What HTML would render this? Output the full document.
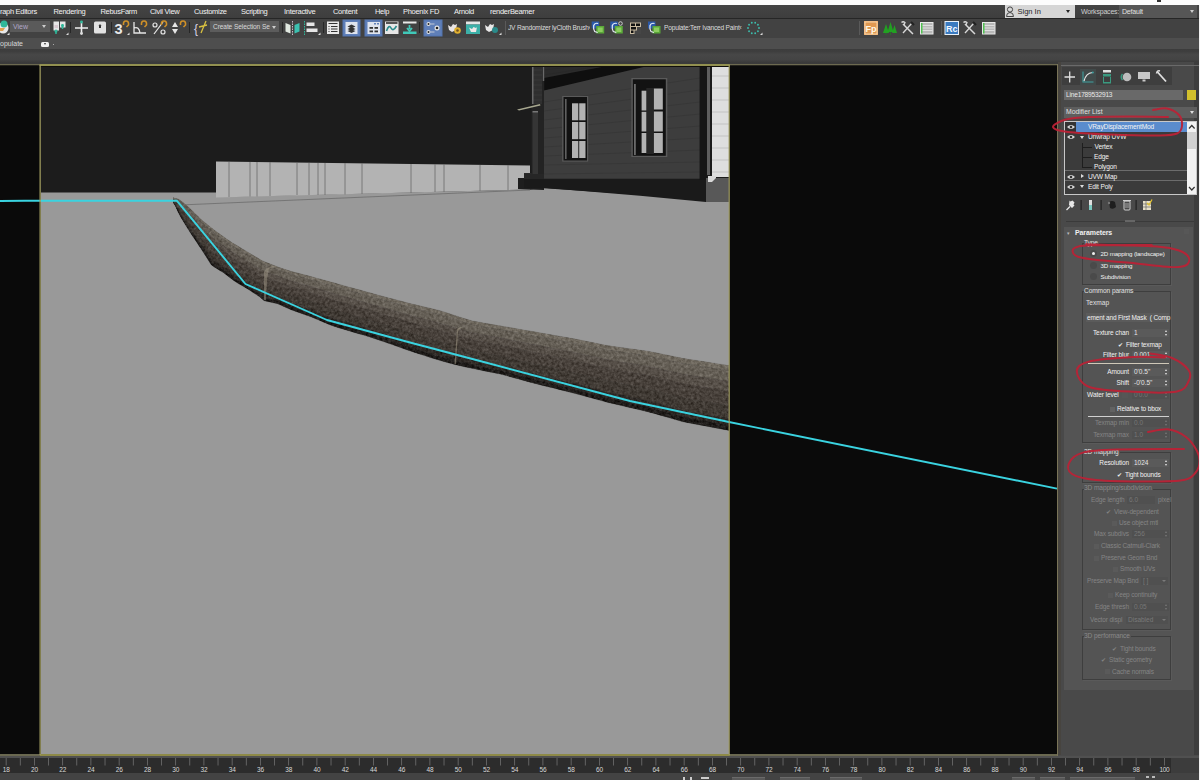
<!DOCTYPE html>
<html><head><meta charset="utf-8">
<style>
*{margin:0;padding:0;box-sizing:border-box}
html,body{width:1200px;height:780px;overflow:hidden;background:#444;font-family:"Liberation Sans",sans-serif;color:#ddd;position:relative}
.a{position:absolute}
.t{position:absolute;white-space:nowrap}
svg{position:absolute;overflow:hidden}
</style></head><body>
<div class="a" style="left:0px;top:0px;width:1200px;height:5px;background:#fdfdfd;"></div>
<div class="a" style="left:1157px;top:0px;width:4px;height:1.5px;background:#333;"></div>
<div class="a" style="left:1198px;top:5px;width:2px;height:13px;background:#e8e8e8;"></div>
<div class="a" style="left:0px;top:5px;width:1200px;height:13px;background:#404040;background:linear-gradient(#444,#3e3e3e);"></div>
<div class="t" style="top:6.50px;font-size:7.5px;line-height:10px;color:#f2f2f2;letter-spacing:-0.3px;left:0px;">raph Editors</div>
<div class="t" style="top:6.50px;font-size:7.5px;line-height:10px;color:#f2f2f2;letter-spacing:-0.3px;left:53.5px;">Rendering</div>
<div class="t" style="top:6.50px;font-size:7.5px;line-height:10px;color:#f2f2f2;letter-spacing:-0.3px;left:100.5px;">RebusFarm</div>
<div class="t" style="top:6.50px;font-size:7.5px;line-height:10px;color:#f2f2f2;letter-spacing:-0.3px;left:150px;">Civil View</div>
<div class="t" style="top:6.50px;font-size:7.5px;line-height:10px;color:#f2f2f2;letter-spacing:-0.3px;left:194px;">Customize</div>
<div class="t" style="top:6.50px;font-size:7.5px;line-height:10px;color:#f2f2f2;letter-spacing:-0.3px;left:241px;">Scripting</div>
<div class="t" style="top:6.50px;font-size:7.5px;line-height:10px;color:#f2f2f2;letter-spacing:-0.3px;left:284px;">Interactive</div>
<div class="t" style="top:6.50px;font-size:7.5px;line-height:10px;color:#f2f2f2;letter-spacing:-0.3px;left:333px;">Content</div>
<div class="t" style="top:6.50px;font-size:7.5px;line-height:10px;color:#f2f2f2;letter-spacing:-0.3px;left:375px;">Help</div>
<div class="t" style="top:6.50px;font-size:7.5px;line-height:10px;color:#f2f2f2;letter-spacing:-0.3px;left:403px;">Phoenix FD</div>
<div class="t" style="top:6.50px;font-size:7.5px;line-height:10px;color:#f2f2f2;letter-spacing:-0.3px;left:454px;">Arnold</div>
<div class="t" style="top:6.50px;font-size:7.5px;line-height:10px;color:#f2f2f2;letter-spacing:-0.3px;left:490px;">renderBeamer</div>
<div class="a" style="left:1005px;top:5px;width:70px;height:13px;background:#d6d6d6;"></div>
<div class="t" style="top:6.50px;font-size:7.5px;line-height:10px;color:#1e1e1e;left:1017.5px;">Sign In</div>
<svg style="left:1005px;top:5px" width="10" height="13" viewBox="0 0 10 13"><circle cx="5" cy="4.5" r="2.6" fill="none" stroke="#444" stroke-width="1"/><path d="M1.5,11.5 Q1.5,7.5 5,7.5 Q8.5,7.5 8.5,11.5Z" fill="none" stroke="#444" stroke-width="1"/></svg><div class="a" style="left:1066px;top:10px;width:0;height:0;border-left:2.5px solid transparent;border-right:2.5px solid transparent;border-top:3px solid #222"></div><div class="t" style="top:6.50px;font-size:7px;line-height:10px;color:#cfcfcf;letter-spacing:-0.2px;left:1081px;">Workspaces:</div>
<div class="a" style="left:1119px;top:5px;width:78px;height:13px;background:#565656;"></div>
<div class="t" style="top:6.50px;font-size:7px;line-height:10px;color:#e0e0e0;letter-spacing:-0.2px;left:1122px;">Default</div>
<div class="a" style="left:1190px;top:10px;width:0;height:0;border-left:2.5px solid transparent;border-right:2.5px solid transparent;border-top:3px solid #ccc"></div><div class="a" style="left:0px;top:18px;width:1200px;height:20px;background:#424242;"></div>
<div class="a" style="left:0px;top:18px;width:1200px;height:1px;background:#262626;"></div>
<div class="a" style="left:0px;top:38px;width:1200px;height:11px;background:#4e4e4e;"></div>
<svg style="left:0;top:0" width="1200" height="40" viewBox="0 0 1200 40"><circle cx="3" cy="28" r="5.5" fill="#e8e8e8"/><circle cx="4" cy="24" r="3.5" fill="#2fb89a"/><path d="M-2,28 L5,28 L3,31 L-2,31Z" fill="#e0a050"/><path d="M7,35 L9.5,35 L9.5,32.5Z" fill="#ddd"/><rect x="53.5" y="21.5" width="5.5" height="9" fill="#e6e6e6"/><rect x="60" y="21.5" width="5.5" height="6" fill="#e6e6e6"/><rect x="54.5" y="25" width="3.5" height="3" fill="#d8c8d0"/><path d="M56,30 L56,34 M62.5,24 L62.5,29" stroke="#2fb89a" stroke-width="1.5"/><circle cx="56" cy="31" r="1.5" fill="#2fb89a"/><circle cx="62.5" cy="25.5" r="1.5" fill="#2fb89a"/><path d="M66,35 L68.5,35 L68.5,32.5Z" fill="#ddd"/><rect x="70" y="22" width="1" height="11" fill="#262626"/><path d="M75,28 L88,28 M81.5,21.5 L81.5,34" stroke="#eee" stroke-width="1.6"/><circle cx="81.5" cy="22" r="1.4" fill="#2fb89a"/><circle cx="81.5" cy="33.5" r="1.4" fill="#ddd"/><rect x="94" y="21.5" width="12" height="12" rx="1.5" fill="#e2e2e2"/><path d="M98.5,26 L100,24 L101.5,26 L101,26 L101,28 L99,28 L99,26Z" fill="#333"/><rect x="111" y="22" width="1" height="11" fill="#262626"/><text x="114.5" y="33.5" font-family="Liberation Sans" font-weight="bold" font-size="14.5" fill="#e8e8e8">3</text><path d="M123.5,25 Q123,21 126,21 Q129,21 128.5,25 L126.5,27" stroke="#cf9028" stroke-width="1.6" fill="none"/><path d="M127,35 L129.5,35 L129.5,32.5Z" fill="#ddd"/><path d="M134,22 L134,33 L146,33 M134,28 Q139,26 140,33" stroke="#e6e6e6" stroke-width="1.3" fill="none"/><path d="M141.5,25 Q141,21 144,21 Q147,21 146.5,25 L144.5,27" stroke="#cf9028" stroke-width="1.6" fill="none"/><circle cx="155" cy="25" r="2" stroke="#e6e6e6" stroke-width="1.2" fill="none"/><circle cx="163" cy="32" r="2" stroke="#e6e6e6" stroke-width="1.2" fill="none"/><path d="M154,34 L163,22" stroke="#e6e6e6" stroke-width="1.2"/><path d="M161.5,25 Q161,21 164,21 Q167,21 166.5,25 L164.5,27" stroke="#cf9028" stroke-width="1.6" fill="none"/><path d="M172,27 L175,22 L178,27Z M172,29 L178,29 L175,34Z" fill="#e6e6e6"/><path d="M180.5,25 Q180,21 183,21 Q186,21 185.5,25 L183.5,27" stroke="#cf9028" stroke-width="1.6" fill="none"/><rect x="189" y="22" width="1" height="11" fill="#262626"/><text x="194" y="33" font-family="Liberation Sans" font-size="12" fill="#d8d0e8">{</text><path d="M201,33 L206,21 M199,27 L207,25" stroke="#d8c040" stroke-width="1.3"/><rect x="282" y="22" width="1" height="11" fill="#262626"/><path d="M285.5,23 L290.5,25 L290.5,33.5 L285.5,31.5Z" fill="#e0e8e0"/><path d="M299.5,23 L294.5,25 L294.5,33.5 L299.5,31.5Z" fill="#3cc0b0"/><path d="M292.5,21 L292.5,35" stroke="#c8b8c8" stroke-width="1" stroke-dasharray="1.5,1"/><path d="M304.5,21 L304.5,35" stroke="#2fb89a" stroke-width="1" stroke-dasharray="1.5,1"/><rect x="306.5" y="22.5" width="8" height="3.5" fill="#e6e6e6"/><rect x="306.5" y="28.5" width="11" height="3.5" fill="#e6e6e6"/><path d="M318,35 L320.5,35 L320.5,32.5Z" fill="#ddd"/><rect x="323" y="22" width="1" height="11" fill="#262626"/><rect x="327" y="21.5" width="12" height="12.5" fill="#e8e8e8"/><path d="M328.5,23.5 L337.5,23.5 M328.5,26.5 L329.5,26.5 M331,26.5 L337.5,26.5 M328.5,29 L329.5,29 M331,29 L337.5,29 M328.5,31.5 L329.5,31.5 M331,31.5 L337.5,31.5" stroke="#333" stroke-width="1"/><rect x="343" y="20" width="17" height="16" fill="#5f7fb8" stroke="#5374b0" stroke-width="1"/><rect x="345.5" y="22" width="12" height="12" fill="#dfe4ee"/><path d="M347.5,26.5 L351.5,24.5 L355.5,26.5 L351.5,28.5Z M347.5,29 L351.5,27 L355.5,29 L351.5,31Z M347.5,31 L351.5,29.5 L355.5,31 L351.5,33Z" fill="#333"/><rect x="365" y="20" width="17" height="16" fill="#5f7fb8" stroke="#5374b0" stroke-width="1"/><rect x="367.5" y="22" width="12.5" height="12" fill="#dfe4ee"/><rect x="374" y="23" width="2" height="1.5" fill="#6080b8"/><rect x="377" y="23" width="2" height="1.5" fill="#6080b8"/><rect x="369.5" y="27" width="3.5" height="1.8" fill="#333"/><rect x="374.5" y="27" width="3.5" height="1.8" fill="#333"/><rect x="369.5" y="30.5" width="3.5" height="1.8" fill="#333"/><rect x="374.5" y="30.5" width="3.5" height="1.8" fill="#333"/><rect x="385" y="21.5" width="13.5" height="12.5" fill="#e6e6e6"/><rect x="386" y="22" width="11.5" height="2" fill="#555"/><path d="M386.5,31 Q389,24 391,28 Q393,32 396.5,26" stroke="#2a8a8a" stroke-width="1.6" fill="none"/><rect x="403" y="21.5" width="13.5" height="2" fill="#e8e8e8"/><path d="M409.5,25 L409.5,29 M407,28 L409.5,31 L412,28" stroke="#40c8b8" stroke-width="1.8" fill="none"/><rect x="403" y="31.5" width="13.5" height="2.5" fill="#40c8b8"/><rect x="419" y="22" width="1" height="11" fill="#262626"/><rect x="424" y="20" width="18" height="16" fill="#5f7fb8" stroke="#5374b0" stroke-width="1"/><circle cx="428.5" cy="24" r="2" fill="#e8e8e8"/><circle cx="428.5" cy="24" r="1" fill="#222"/><circle cx="428.5" cy="32" r="2" fill="#e8e8e8"/><circle cx="428.5" cy="32" r="1" fill="#222"/><circle cx="437" cy="28" r="2.5" fill="#e8e8e8"/><circle cx="437" cy="28" r="1.3" fill="#222"/><path d="M430.5,24 L434.5,24 M430.5,32 L434.5,32" stroke="#ddd" stroke-width="0.8"/><path d="M448,25 L451,27 L453,24 L455,25 L457,24 L456,30 L452,32 L449,30Z" fill="#e8e4e4"/><circle cx="457.5" cy="30.5" r="3.3" fill="#e0b030"/><circle cx="457.5" cy="30.5" r="1.3" fill="#705020"/><rect x="466" y="21.5" width="14" height="3" fill="#e6e6e6"/><rect x="466" y="24.5" width="14" height="9.5" fill="#3cb0a8"/><path d="M469,27.5 L472,29 L473.5,27 L476,28 L477,27 L476,32 L471,32Z" fill="#f0e8e8"/><path d="M485,25 L488,27 L490,24 L492,25 L494,24 L493,30 L489,32 L486,30Z" fill="#e8e8e8"/><circle cx="495" cy="30" r="3" fill="#2a8a8a"/><path d="M499,35 L501.5,35 L501.5,32.5Z" fill="#ddd"/><rect x="505" y="21" width="1" height="14" fill="#5a5a5a"/><rect x="591.7" y="21.5" width="7.5" height="7" fill="#2a58a8"/><rect x="596.2" y="26" width="8" height="7.5" fill="#5aa838"/><rect x="597.7" y="27.5" width="5" height="4.5" fill="#8ccc60"/><path d="M598.2,23.5 Q594.7,22.5 593.7,25.5 Q593.2,29 594.7,31.5 L597.7,32.5" stroke="#e8eef8" stroke-width="1.2" fill="none"/><rect x="610.3" y="21.5" width="7.5" height="7" fill="#2a58a8"/><rect x="614.8" y="26" width="8" height="7.5" fill="#5aa838"/><rect x="616.3" y="27.5" width="5" height="4.5" fill="#8ccc60"/><path d="M616.8,23.5 Q613.3,22.5 612.3,25.5 Q611.8,29 613.3,31.5 L616.3,32.5" stroke="#e8eef8" stroke-width="1.2" fill="none"/><rect x="648" y="21.5" width="7.5" height="7" fill="#2a58a8"/><rect x="652.5" y="26" width="8" height="7.5" fill="#5aa838"/><rect x="654" y="27.5" width="5" height="4.5" fill="#8ccc60"/><path d="M654.5,23.5 Q651,22.5 650,25.5 Q649.5,29 651,31.5 L654,32.5" stroke="#e8eef8" stroke-width="1.2" fill="none"/><circle cx="620.5" cy="23.5" r="1.8" fill="none" stroke="#e8e8e8" stroke-width="0.8"/><rect x="630" y="22.5" width="11" height="11.5" fill="#c8baa0"/><rect x="631" y="23.5" width="4" height="2.5" fill="#111"/><rect x="636" y="23.5" width="4" height="2.5" fill="#111"/><rect x="631" y="27" width="5" height="2.5" fill="#111"/><rect x="631" y="30.5" width="2.5" height="2.5" fill="#111"/><rect x="637" y="27" width="4" height="7" fill="#464646"/><rect x="634.5" y="30.5" width="6.5" height="3.5" fill="#464646"/><circle cx="759.00" cy="28.00" r="0.9" fill="#3cc0b0"/><circle cx="757.95" cy="31.23" r="0.9" fill="#3cc0b0"/><circle cx="755.20" cy="33.23" r="0.9" fill="#3cc0b0"/><circle cx="751.80" cy="33.23" r="0.9" fill="#3cc0b0"/><circle cx="749.05" cy="31.23" r="0.9" fill="#3cc0b0"/><circle cx="748.00" cy="28.00" r="0.9" fill="#3cc0b0"/><circle cx="749.05" cy="24.77" r="0.9" fill="#3cc0b0"/><circle cx="751.80" cy="22.77" r="0.9" fill="#3cc0b0"/><circle cx="755.20" cy="22.77" r="0.9" fill="#3cc0b0"/><circle cx="757.95" cy="24.77" r="0.9" fill="#3cc0b0"/><path d="M760,35 L762.5,35 L762.5,32.5Z" fill="#ddd"/><rect x="859" y="21" width="1" height="14" fill="#5a5a5a"/><rect x="864" y="21" width="14" height="14" fill="#f0a860"/><rect x="865" y="22" width="12" height="12" fill="#e09850" stroke="#f8e0c0" stroke-width="0.8"/><text x="865.5" y="32" font-family="Liberation Sans" font-weight="bold" font-size="9" fill="#fff8e8">Fp</text><path d="M883,33 L886,24 L889,33Z M887.5,32 L890.5,22 L893.5,32Z M892,33 L894.5,25 L897,33Z" fill="#22a022"/><path d="M885.5,33 L886.5,33 L886.5,35 L885.5,35Z M890,32 L891,32 L891,35 L890,35Z" fill="#2a6a2a"/><path d="M903,24 L913,34" stroke="#d8d8d8" stroke-width="1.5"/><path d="M912,23 L903,33" stroke="#d8d8d8" stroke-width="1.3"/><path d="M901.5,22.5 Q903,21 905,22.5 L904,25" stroke="#d8d8d8" stroke-width="1.3" fill="none"/><path d="M911,22 L914,25" stroke="#222" stroke-width="2.2"/><path d="M965,24 L975,34" stroke="#d8d8d8" stroke-width="1.5"/><path d="M974,23 L965,33" stroke="#d8d8d8" stroke-width="1.3"/><path d="M963.5,22.5 Q965,21 967,22.5 L966,25" stroke="#d8d8d8" stroke-width="1.3" fill="none"/><path d="M973,22 L976,25" stroke="#222" stroke-width="2.2"/><rect x="920" y="22" width="13.5" height="12.5" fill="#e8e8e8"/><rect x="921" y="23" width="11.5" height="10.5" fill="#b8b8b8"/><path d="M921,25.5 L932.5,25.5 M921,28 L932.5,28 M921,30.5 L932.5,30.5" stroke="#e8e8e8" stroke-width="0.8"/><rect x="921" y="23" width="1.5" height="10.5" fill="#50c050"/><rect x="982" y="22" width="13.5" height="12.5" fill="#e8e8e8"/><rect x="983" y="23" width="11.5" height="10.5" fill="#b8b8b8"/><path d="M983,25.5 L994.5,25.5 M983,28 L994.5,28 M983,30.5 L994.5,30.5" stroke="#e8e8e8" stroke-width="0.8"/><rect x="983" y="23" width="1.5" height="10.5" fill="#50c050"/><rect x="941" y="21" width="1" height="14" fill="#5a5a5a"/><rect x="944.5" y="21" width="14.5" height="14" fill="#e8f0f8"/><rect x="945.5" y="22" width="12.5" height="12" fill="#3a7ac0"/><text x="946" y="32" font-family="Liberation Sans" font-weight="bold" font-size="9" fill="#f0f8ff">Rc</text></svg>
<div class="a" style="left:10px;top:21px;width:40px;height:11px;background:#5a5a5a;"></div>
<div class="t" style="top:21.50px;font-size:7px;line-height:10px;color:#b0a8c8;left:13px;">View</div>
<div class="a" style="left:42px;top:25px;width:0;height:0;border-left:2.5px solid transparent;border-right:2.5px solid transparent;border-top:3px solid #ccc"></div>
<div class="a" style="left:209.75px;top:21px;width:69.5px;height:11.3px;background:#5c5c5c;"></div>
<div class="t" style="top:21.60px;font-size:6.6px;line-height:10px;color:#d8d8d8;letter-spacing:-0.1px;left:213px;">Create Selection Se</div>
<div class="a" style="left:271.5px;top:25.5px;width:0;height:0;border-left:2.5px solid transparent;border-right:2.5px solid transparent;border-top:3px solid #ccc"></div>
<div class="t" style="top:23.00px;font-size:6.6px;line-height:10px;color:#dcdcdc;letter-spacing:-0.2px;left:508px;width:82px;overflow:hidden;">JV Randomizer&nbsp;lyCloth Brush&#8249;</div>
<div class="t" style="top:23.00px;font-size:6.6px;line-height:10px;color:#dcdcdc;letter-spacing:-0.2px;left:664px;width:81px;overflow:hidden;">Populate:Terr&nbsp;Ivanced Paint&#8249;</div>
<div class="t" style="top:38.50px;font-size:7px;line-height:10px;color:#d8d8d8;left:0px;">opulate</div>
<div class="a" style="left:41px;top:42px;width:8px;height:4.5px;background:#f0f0f0;border-radius:1.5px;"></div>
<div class="a" style="left:43.5px;top:43.3px;width:0;height:0;border-left:1.5px solid transparent;border-right:1.5px solid transparent;border-top:2px solid #333"></div>
<div class="a" style="left:52.5px;top:43.5px;width:1.5px;height:1.5px;background:#aaa;"></div>
<div class="a" style="left:0px;top:49px;width:1200px;height:16px;background:#404040;background:linear-gradient(#3c3c3c,#3e3e3e 15%,#474747 35%,#444 65%,#3a3a3a 85%,#3c3c3c);"></div>
<svg class="a" style="left:0;top:64px" width="1058" height="692" viewBox="0 64 1058 692">
<defs>
<filter id="noise" x="0" y="0" width="100%" height="100%" color-interpolation-filters="sRGB">
<feTurbulence type="fractalNoise" baseFrequency="0.35" numOctaves="3" seed="7" result="n"/>
<feColorMatrix in="n" type="matrix" values="1 0 0 0 0  1 0 0 0 0  1 0 0 0 0  0 0 0 0 1" result="g"/>
<feComposite in="SourceGraphic" in2="g" operator="arithmetic" k1="0" k2="1" k3="0.26" k4="-0.13" result="c"/>
<feComposite in="c" in2="SourceGraphic" operator="in"/>
</filter>
<linearGradient id="curbg" x1="0" y1="0" x2="0" y2="1">
<stop offset="0" stop-color="#6b6457"/><stop offset="0.3" stop-color="#585146"/><stop offset="1" stop-color="#3b352e"/>
</linearGradient>
</defs>
<rect x="0" y="64" width="1058" height="691" fill="#0a0a0a"/>
<!-- image area -->
<rect x="41" y="65" width="688" height="689" fill="#999999"/>
<polygon points="41,65 729,65 729,178 706,178 706,199 540,188 530,189.5 216,197 216,192.6 41,192.6" fill="#1c1c1c"/>
<!-- fence -->
<polygon points="216,161.6 530,165.5 530,189.5 216,197.5" fill="#b3b3b3"/>
<g stroke="#6a6a6a" stroke-width="0.8">
<line x1="229" y1="162" x2="229" y2="197"/><line x1="250" y1="162" x2="250" y2="196.5"/><line x1="257" y1="162" x2="257" y2="196.5"/><line x1="270" y1="162" x2="270" y2="196"/><line x1="297" y1="163" x2="297" y2="195"/><line x1="309" y1="163" x2="309" y2="195"/><line x1="318" y1="163" x2="318" y2="195"/><line x1="325" y1="163" x2="325" y2="195"/><line x1="345" y1="163" x2="345" y2="194.5"/><line x1="362" y1="163" x2="362" y2="194"/><line x1="411" y1="164" x2="411" y2="193"/><line x1="435" y1="164" x2="435" y2="192"/><line x1="444" y1="164" x2="444" y2="192"/><line x1="480" y1="165" x2="480" y2="191"/><line x1="508" y1="165" x2="508" y2="190"/>
</g>
<line x1="180" y1="205" x2="530" y2="190" stroke="#6c6c6c" stroke-width="0.8"/>
<!-- steps -->
<polygon points="518,178 544,178 544,190 518,189" fill="#1e1e1e"/>
<rect x="524" y="173" width="20" height="6" fill="#2a2a2a"/>
<!-- house -->
<polygon points="544,65 729,65 729,70 700,67 544,90.5" fill="#0f0f0f"/>
<polygon points="544,65 612,65 544,78" fill="#2b2b2b"/>
<g stroke="#262626" stroke-width="0.6"><line x1="544" y1="70" x2="585" y2="65"/><line x1="544" y1="75" x2="600" y2="66"/></g>
<rect x="531.5" y="65" width="12.7" height="115" fill="#232323"/>
<rect x="533" y="65" width="9" height="39" fill="#2f2f2f"/>
<g stroke="#3e3e3e" stroke-width="0.6"><line x1="533" y1="70" x2="542" y2="70"/><line x1="533" y1="75" x2="542" y2="75"/><line x1="533" y1="80" x2="542" y2="80"/><line x1="533" y1="85" x2="542" y2="85"/><line x1="533" y1="90" x2="542" y2="90"/><line x1="533" y1="95" x2="542" y2="95"/><line x1="533" y1="100" x2="542" y2="100"/></g>
<rect x="532" y="65" width="1.5" height="39" fill="#6a6a6a"/>
<rect x="542.8" y="65" width="1.4" height="16" fill="#6a6a6a"/>
<rect x="532.5" y="112" width="5.5" height="66" fill="#353535"/>
<rect x="532.5" y="111" width="5.5" height="1.5" fill="#777"/>
<polygon points="517,109.5 540,104 540.5,105.5 519,110.5" fill="#a8a890"/>
<polygon points="544,90.5 652,65 700,65 700,179 544,179" fill="#3d3d3d"/>
<g stroke="#353535" stroke-width="0.7">
<line x1="544" y1="102" x2="700" y2="78"/><line x1="544" y1="111" x2="700" y2="90"/><line x1="544" y1="120" x2="700" y2="102"/><line x1="544" y1="129" x2="700" y2="114"/><line x1="544" y1="138" x2="700" y2="126"/><line x1="544" y1="147" x2="700" y2="138"/><line x1="544" y1="156" x2="700" y2="150"/><line x1="544" y1="165" x2="700" y2="162"/><line x1="544" y1="174" x2="700" y2="172"/>
</g>
<polygon points="524,178.7 706,178.7 706,202 640,195.7 544,187.7 524,188" fill="#1a1a1a"/>
<rect x="524" y="174" width="20" height="5" fill="#262626"/>
<rect x="699.6" y="65" width="7.4" height="115" fill="#151515"/>
<rect x="707" y="65" width="3" height="110" fill="#5e5e5e"/>
<rect x="710" y="65" width="2" height="113" fill="#1a1a1a"/>
<rect x="712" y="65" width="17" height="112" fill="#dedede"/>
<g stroke="#b8b8b8" stroke-width="0.7"><line x1="712" y1="76" x2="729" y2="76"/><line x1="712" y1="88" x2="729" y2="88"/><line x1="712" y1="100" x2="729" y2="100"/><line x1="712" y1="112" x2="729" y2="112"/><line x1="712" y1="124" x2="729" y2="124"/><line x1="712" y1="136" x2="729" y2="136"/><line x1="712" y1="148" x2="729" y2="148"/><line x1="712" y1="160" x2="729" y2="160"/><line x1="712" y1="172" x2="729" y2="172"/></g>
<polygon points="706,178 729,178 729,202 706,202" fill="#585858"/>
<polygon points="708,176 716,176 716,178 712,182 708,182" fill="#d8d8d8"/>
<!-- window 1 -->
<rect x="562.2" y="96" width="26" height="65.6" fill="#5a5a5a"/>
<rect x="563.5" y="97" width="23.5" height="63.5" fill="#121212"/>
<rect x="565" y="99" width="1.6" height="60" fill="#606060"/>
<g fill="#b2b2b2"><rect x="572" y="103.3" width="6.3" height="17"/><rect x="579.2" y="103.3" width="6.3" height="17"/><rect x="572" y="122" width="6.3" height="17.2"/><rect x="579.2" y="122" width="6.3" height="17.2"/><rect x="572" y="141" width="6.3" height="17"/><rect x="579.2" y="141" width="6.3" height="17"/></g>
<!-- window 2 -->
<rect x="631.4" y="78" width="35.9" height="79" fill="#5a5a5a"/>
<rect x="632.8" y="79.3" width="33" height="76.5" fill="#121212"/>
<rect x="634" y="84" width="1.8" height="71" fill="#6a6a6a"/>
<rect x="646.3" y="88" width="7.6" height="66" fill="#262626"/>
<g fill="#b2b2b2"><rect x="641.6" y="90.7" width="4.7" height="19.8"/><rect x="653.9" y="88.5" width="8.9" height="21"/><rect x="641.6" y="111.8" width="4.7" height="19.7"/><rect x="653.9" y="111.5" width="8.9" height="20"/><rect x="641.6" y="133" width="4.7" height="20"/><rect x="653.9" y="133" width="8.9" height="20"/></g>
<!-- curb -->
<g filter="url(#noise)"><polygon points="173.0,197.6 175.5,198.3 178.1,198.9 180.6,200.4 183.2,202.5 185.7,204.7 188.3,206.8 190.8,209.3 193.3,211.8 195.9,214.3 198.4,216.8 201.0,219.3 203.5,221.4 206.1,223.4 208.6,225.4 211.1,227.5 213.7,229.5 216.2,231.5 218.8,233.3 221.3,235.1 223.9,236.9 226.4,238.7 228.9,240.5 231.5,242.3 234.0,243.8 236.6,245.3 239.1,246.8 241.7,248.4 244.2,249.9 246.7,251.4 249.3,252.9 251.8,254.5 254.4,256.0 256.9,257.5 259.5,259.1 262.0,260.6 264.0,261.5 270.7,264.1 277.5,266.8 284.2,269.1 291.0,271.3 297.7,273.0 304.4,274.8 311.2,276.6 317.9,278.4 324.7,280.3 331.4,282.1 338.1,284.0 344.9,285.9 351.6,287.7 358.3,289.6 365.1,291.4 371.8,293.3 378.6,295.2 385.3,297.0 392.0,298.8 398.8,300.5 405.5,302.3 412.3,304.0 419.0,305.6 425.7,307.2 432.5,308.8 439.2,310.4 446.0,312.5 452.7,314.7 459.4,316.9 466.2,319.1 472.9,321.0 479.7,322.2 486.4,323.4 493.1,324.6 499.9,325.8 506.6,326.9 513.3,328.1 520.1,329.3 526.8,330.5 533.6,331.6 540.3,332.8 547.0,334.0 553.8,335.2 560.5,336.4 567.3,337.6 574.0,338.8 580.7,340.1 587.5,341.5 594.2,342.8 601.0,344.2 607.7,345.5 614.4,346.5 621.2,347.4 627.9,348.4 634.7,349.3 641.4,350.3 648.1,351.2 654.9,352.5 661.6,353.9 668.3,355.3 675.1,356.7 681.8,358.1 688.6,359.2 695.3,360.2 702.0,361.3 708.8,362.3 715.5,363.4 722.3,364.4 729.0,365.5 729.0,370.7 722.3,369.6 715.5,368.6 708.8,367.5 702.0,366.4 695.3,365.3 688.6,364.3 681.8,363.2 675.1,361.7 668.3,360.3 661.6,358.8 654.9,357.4 648.1,356.1 641.4,355.1 634.7,354.1 627.9,353.1 621.2,352.1 614.4,351.1 607.7,350.1 601.0,348.7 594.2,347.3 587.5,345.9 580.7,344.5 574.0,343.2 567.3,342.0 560.5,340.7 553.8,339.5 547.0,338.2 540.3,337.0 533.6,335.8 526.8,334.5 520.1,333.3 513.3,332.1 506.6,330.9 499.9,329.6 493.1,328.4 486.4,327.2 479.7,326.0 472.9,324.9 466.2,322.9 459.4,320.8 452.7,318.6 446.0,316.5 439.2,314.4 432.5,312.8 425.7,311.1 419.0,309.5 412.3,307.9 405.5,306.1 398.8,304.3 392.0,302.4 385.3,300.6 378.6,298.8 371.8,296.9 365.1,295.0 358.3,293.1 351.6,291.2 344.9,289.4 338.1,287.5 331.4,285.6 324.7,283.7 317.9,281.7 311.2,279.9 304.4,278.0 297.7,276.2 291.0,274.3 284.2,272.1 277.5,269.8 270.7,267.2 264.0,264.6 262.0,263.7 259.5,262.1 256.9,260.6 254.4,259.0 251.8,257.5 249.3,255.9 246.7,254.4 244.2,252.9 241.7,251.3 239.1,249.8 236.6,248.3 234.0,246.8 231.5,245.2 228.9,243.4 226.4,241.6 223.9,239.8 221.3,238.0 218.8,236.2 216.2,234.5 213.7,232.5 211.1,230.5 208.6,228.3 206.1,226.1 203.5,223.9 201.0,221.7 198.4,219.1 195.9,216.5 193.3,213.8 190.8,211.2 188.3,208.6 185.7,206.3 183.2,204.0 180.6,201.7 178.1,200.0 175.5,198.9 173.0,198.0" fill="#6f695f" stroke="#6f695f" stroke-width="0.5"/><polygon points="173.0,198.0 175.5,198.9 178.1,200.0 180.6,201.7 183.2,204.0 185.7,206.3 188.3,208.6 190.8,211.2 193.3,213.8 195.9,216.5 198.4,219.1 201.0,221.7 203.5,223.9 206.1,226.1 208.6,228.3 211.1,230.5 213.7,232.5 216.2,234.5 218.8,236.2 221.3,238.0 223.9,239.8 226.4,241.6 228.9,243.4 231.5,245.2 234.0,246.8 236.6,248.3 239.1,249.8 241.7,251.3 244.2,252.9 246.7,254.4 249.3,255.9 251.8,257.5 254.4,259.0 256.9,260.6 259.5,262.1 262.0,263.7 264.0,264.6 270.7,267.2 277.5,269.8 284.2,272.1 291.0,274.3 297.7,276.2 304.4,278.0 311.2,279.9 317.9,281.7 324.7,283.7 331.4,285.6 338.1,287.5 344.9,289.4 351.6,291.2 358.3,293.1 365.1,295.0 371.8,296.9 378.6,298.8 385.3,300.6 392.0,302.4 398.8,304.3 405.5,306.1 412.3,307.9 419.0,309.5 425.7,311.1 432.5,312.8 439.2,314.4 446.0,316.5 452.7,318.6 459.4,320.8 466.2,322.9 472.9,324.9 479.7,326.0 486.4,327.2 493.1,328.4 499.9,329.6 506.6,330.9 513.3,332.1 520.1,333.3 526.8,334.5 533.6,335.8 540.3,337.0 547.0,338.2 553.8,339.5 560.5,340.7 567.3,342.0 574.0,343.2 580.7,344.5 587.5,345.9 594.2,347.3 601.0,348.7 607.7,350.1 614.4,351.1 621.2,352.1 627.9,353.1 634.7,354.1 641.4,355.1 648.1,356.1 654.9,357.4 661.6,358.8 668.3,360.3 675.1,361.7 681.8,363.2 688.6,364.3 695.3,365.3 702.0,366.4 708.8,367.5 715.5,368.6 722.3,369.6 729.0,370.7 729.0,381.8 722.3,380.6 715.5,379.5 708.8,378.4 702.0,377.3 695.3,376.2 688.6,375.1 681.8,374.0 675.1,372.4 668.3,370.9 661.6,369.4 654.9,367.8 648.1,366.4 641.4,365.3 634.7,364.2 627.9,363.1 621.2,362.0 614.4,360.8 607.7,359.7 601.0,358.3 594.2,356.8 587.5,355.4 580.7,353.9 574.0,352.5 567.3,351.1 560.5,349.8 553.8,348.5 547.0,347.2 540.3,345.8 533.6,344.5 526.8,343.2 520.1,341.8 513.3,340.5 506.6,339.2 499.9,337.9 493.1,336.6 486.4,335.4 479.7,334.2 472.9,332.9 466.2,331.1 459.4,329.1 452.7,327.0 446.0,324.9 439.2,322.9 432.5,321.2 425.7,319.5 419.0,317.7 412.3,316.0 405.5,314.1 398.8,312.2 392.0,310.2 385.3,308.3 378.6,306.4 371.8,304.4 365.1,302.5 358.3,300.6 351.6,298.7 344.9,296.8 338.1,294.9 331.4,293.0 324.7,290.9 317.9,288.8 311.2,286.7 304.4,284.8 297.7,282.8 291.0,280.9 284.2,278.5 277.5,276.0 270.7,273.7 264.0,271.3 262.0,270.2 259.5,268.5 256.9,266.9 254.4,265.4 251.8,263.8 249.3,262.2 246.7,260.7 244.2,259.2 241.7,257.7 239.1,256.2 236.6,254.7 234.0,253.1 231.5,251.4 228.9,249.6 226.4,247.8 223.9,245.9 221.3,244.2 218.8,242.5 216.2,240.7 213.7,238.8 211.1,236.8 208.6,234.3 206.1,231.7 203.5,229.2 201.0,226.7 198.4,223.9 195.9,221.0 193.3,218.2 190.8,215.3 188.3,212.5 185.7,209.8 183.2,207.2 180.6,204.5 178.1,202.2 175.5,200.3 173.0,198.8" fill="#655f56" stroke="#655f56" stroke-width="0.5"/><polygon points="173.0,198.8 175.5,200.3 178.1,202.2 180.6,204.5 183.2,207.2 185.7,209.8 188.3,212.5 190.8,215.3 193.3,218.2 195.9,221.0 198.4,223.9 201.0,226.7 203.5,229.2 206.1,231.7 208.6,234.3 211.1,236.8 213.7,238.8 216.2,240.7 218.8,242.5 221.3,244.2 223.9,245.9 226.4,247.8 228.9,249.6 231.5,251.4 234.0,253.1 236.6,254.7 239.1,256.2 241.7,257.7 244.2,259.2 246.7,260.7 249.3,262.2 251.8,263.8 254.4,265.4 256.9,266.9 259.5,268.5 262.0,270.2 264.0,271.3 270.7,273.7 277.5,276.0 284.2,278.5 291.0,280.9 297.7,282.8 304.4,284.8 311.2,286.7 317.9,288.8 324.7,290.9 331.4,293.0 338.1,294.9 344.9,296.8 351.6,298.7 358.3,300.6 365.1,302.5 371.8,304.4 378.6,306.4 385.3,308.3 392.0,310.2 398.8,312.2 405.5,314.1 412.3,316.0 419.0,317.7 425.7,319.5 432.5,321.2 439.2,322.9 446.0,324.9 452.7,327.0 459.4,329.1 466.2,331.1 472.9,332.9 479.7,334.2 486.4,335.4 493.1,336.6 499.9,337.9 506.6,339.2 513.3,340.5 520.1,341.8 526.8,343.2 533.6,344.5 540.3,345.8 547.0,347.2 553.8,348.5 560.5,349.8 567.3,351.1 574.0,352.5 580.7,353.9 587.5,355.4 594.2,356.8 601.0,358.3 607.7,359.7 614.4,360.8 621.2,362.0 627.9,363.1 634.7,364.2 641.4,365.3 648.1,366.4 654.9,367.8 661.6,369.4 668.3,370.9 675.1,372.4 681.8,374.0 688.6,375.1 695.3,376.2 702.0,377.3 708.8,378.4 715.5,379.5 722.3,380.6 729.0,381.8 729.0,391.5 722.3,390.4 715.5,389.2 708.8,388.1 702.0,386.9 695.3,385.8 688.6,384.7 681.8,383.5 675.1,381.9 668.3,380.2 661.6,378.6 654.9,377.0 648.1,375.5 641.4,374.3 634.7,373.1 627.9,371.9 621.2,370.7 614.4,369.5 607.7,368.3 601.0,366.8 594.2,365.2 587.5,363.7 580.7,362.1 574.0,360.6 567.3,359.2 560.5,357.8 553.8,356.4 547.0,355.0 540.3,353.7 533.6,352.3 526.8,350.8 520.1,349.4 513.3,347.9 506.6,346.5 499.9,345.1 493.1,343.8 486.4,342.6 479.7,341.3 472.9,340.1 466.2,338.3 459.4,336.4 452.7,334.4 446.0,332.4 439.2,330.4 432.5,328.6 425.7,326.8 419.0,325.0 412.3,323.1 405.5,321.2 398.8,319.1 392.0,317.1 385.3,315.1 378.6,313.1 371.8,311.1 365.1,309.1 358.3,307.2 351.6,305.3 344.9,303.4 338.1,301.5 331.4,299.5 324.7,297.2 317.9,295.0 311.2,292.8 304.4,290.8 297.7,288.7 291.0,286.7 284.2,284.2 277.5,281.6 270.7,279.4 264.0,277.2 262.0,275.9 259.5,274.2 256.9,272.6 254.4,271.0 251.8,269.4 249.3,267.8 246.7,266.2 244.2,264.7 241.7,263.2 239.1,261.7 236.6,260.2 234.0,258.6 231.5,256.9 228.9,255.1 226.4,253.2 223.9,251.4 221.3,249.7 218.8,247.9 216.2,246.2 213.7,244.4 211.1,242.4 208.6,239.6 206.1,236.8 203.5,233.9 201.0,231.1 198.4,228.1 195.9,225.0 193.3,222.0 190.8,219.0 188.3,215.9 185.7,213.0 183.2,210.0 180.6,207.0 178.1,204.2 175.5,201.5 173.0,199.5" fill="#564f48" stroke="#564f48" stroke-width="0.5"/><polygon points="173.0,199.5 175.5,201.5 178.1,204.2 180.6,207.0 183.2,210.0 185.7,213.0 188.3,215.9 190.8,219.0 193.3,222.0 195.9,225.0 198.4,228.1 201.0,231.1 203.5,233.9 206.1,236.8 208.6,239.6 211.1,242.4 213.7,244.4 216.2,246.2 218.8,247.9 221.3,249.7 223.9,251.4 226.4,253.2 228.9,255.1 231.5,256.9 234.0,258.6 236.6,260.2 239.1,261.7 241.7,263.2 244.2,264.7 246.7,266.2 249.3,267.8 251.8,269.4 254.4,271.0 256.9,272.6 259.5,274.2 262.0,275.9 264.0,277.2 270.7,279.4 277.5,281.6 284.2,284.2 291.0,286.7 297.7,288.7 304.4,290.8 311.2,292.8 317.9,295.0 324.7,297.2 331.4,299.5 338.1,301.5 344.9,303.4 351.6,305.3 358.3,307.2 365.1,309.1 371.8,311.1 378.6,313.1 385.3,315.1 392.0,317.1 398.8,319.1 405.5,321.2 412.3,323.1 419.0,325.0 425.7,326.8 432.5,328.6 439.2,330.4 446.0,332.4 452.7,334.4 459.4,336.4 466.2,338.3 472.9,340.1 479.7,341.3 486.4,342.6 493.1,343.8 499.9,345.1 506.6,346.5 513.3,347.9 520.1,349.4 526.8,350.8 533.6,352.3 540.3,353.7 547.0,355.0 553.8,356.4 560.5,357.8 567.3,359.2 574.0,360.6 580.7,362.1 587.5,363.7 594.2,365.2 601.0,366.8 607.7,368.3 614.4,369.5 621.2,370.7 627.9,371.9 634.7,373.1 641.4,374.3 648.1,375.5 654.9,377.0 661.6,378.6 668.3,380.2 675.1,381.9 681.8,383.5 688.6,384.7 695.3,385.8 702.0,386.9 708.8,388.1 715.5,389.2 722.3,390.4 729.0,391.5 729.0,405.8 722.3,404.6 715.5,403.4 708.8,402.2 702.0,401.0 695.3,399.9 688.6,398.7 681.8,397.4 675.1,395.7 668.3,394.0 661.6,392.2 654.9,390.5 648.1,388.8 641.4,387.5 634.7,386.2 627.9,384.8 621.2,383.5 614.4,382.2 607.7,380.8 601.0,379.2 594.2,377.5 587.5,375.9 580.7,374.2 574.0,372.6 567.3,371.1 560.5,369.6 553.8,368.1 547.0,366.6 540.3,365.1 533.6,363.6 526.8,362.0 520.1,360.4 513.3,358.8 506.6,357.2 499.9,355.7 493.1,354.4 486.4,353.1 479.7,351.8 472.9,350.5 466.2,348.9 459.4,347.1 452.7,345.3 446.0,343.3 439.2,341.3 432.5,339.5 425.7,337.5 419.0,335.6 412.3,333.6 405.5,331.5 398.8,329.4 392.0,327.2 385.3,325.1 378.6,323.0 371.8,320.9 365.1,318.8 358.3,316.9 351.6,315.0 344.9,313.0 338.1,311.1 331.4,309.0 324.7,306.5 317.9,304.1 311.2,301.7 304.4,299.5 297.7,297.3 291.0,295.2 284.2,292.5 277.5,289.7 270.7,287.8 264.0,285.9 262.0,284.4 259.5,282.5 256.9,280.8 254.4,279.2 251.8,277.6 249.3,276.0 246.7,274.3 244.2,272.9 241.7,271.4 239.1,269.9 236.6,268.5 234.0,266.7 231.5,265.0 228.9,263.1 226.4,261.2 223.9,259.3 221.3,257.6 218.8,256.0 216.2,254.3 213.7,252.6 211.1,250.6 208.6,247.4 206.1,244.1 203.5,240.8 201.0,237.6 198.4,234.3 195.9,230.9 193.3,227.6 190.8,224.3 188.3,220.9 185.7,217.5 183.2,214.1 180.6,210.7 178.1,207.1 175.5,203.2 173.0,200.5" fill="#48413b" stroke="#48413b" stroke-width="0.5"/><polygon points="173.0,200.5 175.5,203.2 178.1,207.1 180.6,210.7 183.2,214.1 185.7,217.5 188.3,220.9 190.8,224.3 193.3,227.6 195.9,230.9 198.4,234.3 201.0,237.6 203.5,240.8 206.1,244.1 208.6,247.4 211.1,250.6 213.7,252.6 216.2,254.3 218.8,256.0 221.3,257.6 223.9,259.3 226.4,261.2 228.9,263.1 231.5,265.0 234.0,266.7 236.6,268.5 239.1,269.9 241.7,271.4 244.2,272.9 246.7,274.3 249.3,276.0 251.8,277.6 254.4,279.2 256.9,280.8 259.5,282.5 262.0,284.4 264.0,285.9 270.7,287.8 277.5,289.7 284.2,292.5 291.0,295.2 297.7,297.3 304.4,299.5 311.2,301.7 317.9,304.1 324.7,306.5 331.4,309.0 338.1,311.1 344.9,313.0 351.6,315.0 358.3,316.9 365.1,318.8 371.8,320.9 378.6,323.0 385.3,325.1 392.0,327.2 398.8,329.4 405.5,331.5 412.3,333.6 419.0,335.6 425.7,337.5 432.5,339.5 439.2,341.3 446.0,343.3 452.7,345.3 459.4,347.1 466.2,348.9 472.9,350.5 479.7,351.8 486.4,353.1 493.1,354.4 499.9,355.7 506.6,357.2 513.3,358.8 520.1,360.4 526.8,362.0 533.6,363.6 540.3,365.1 547.0,366.6 553.8,368.1 560.5,369.6 567.3,371.1 574.0,372.6 580.7,374.2 587.5,375.9 594.2,377.5 601.0,379.2 607.7,380.8 614.4,382.2 621.2,383.5 627.9,384.8 634.7,386.2 641.4,387.5 648.1,388.8 654.9,390.5 661.6,392.2 668.3,394.0 675.1,395.7 681.8,397.4 688.6,398.7 695.3,399.9 702.0,401.0 708.8,402.2 715.5,403.4 722.3,404.6 729.0,405.8 729.0,418.8 722.3,417.6 715.5,416.3 708.8,415.1 702.0,413.9 695.3,412.6 688.6,411.4 681.8,410.1 675.1,408.3 668.3,406.4 661.6,404.6 654.9,402.7 648.1,401.0 641.4,399.5 634.7,398.0 627.9,396.6 621.2,395.1 614.4,393.7 607.7,392.2 601.0,390.5 594.2,388.7 587.5,387.0 580.7,385.2 574.0,383.5 567.3,381.9 560.5,380.3 553.8,378.7 547.0,377.1 540.3,375.5 533.6,373.9 526.8,372.2 520.1,370.5 513.3,368.8 506.6,367.0 499.9,365.4 493.1,364.1 486.4,362.7 479.7,361.4 472.9,360.0 466.2,358.5 459.4,356.9 452.7,355.2 446.0,353.2 439.2,351.3 432.5,349.4 425.7,347.3 419.0,345.2 412.3,343.2 405.5,340.9 398.8,338.7 392.0,336.4 385.3,334.1 378.6,332.0 371.8,329.8 365.1,327.7 358.3,325.7 351.6,323.8 344.9,321.8 338.1,319.8 331.4,317.7 324.7,315.0 317.9,312.3 311.2,309.8 304.4,307.5 297.7,305.2 291.0,302.9 284.2,300.0 277.5,297.1 270.7,295.4 264.0,293.8 262.0,292.0 259.5,290.0 256.9,288.4 254.4,286.7 251.8,285.1 249.3,283.4 246.7,281.7 244.2,280.3 241.7,278.8 239.1,277.4 236.6,275.9 234.0,274.1 231.5,272.3 228.9,270.4 226.4,268.5 223.9,266.5 221.3,264.9 218.8,263.3 216.2,261.7 213.7,260.0 211.1,258.1 208.6,254.4 206.1,250.8 203.5,247.1 201.0,243.5 198.4,239.9 195.9,236.3 193.3,232.7 190.8,229.1 188.3,225.5 185.7,221.7 183.2,217.8 180.6,214.0 178.1,209.7 175.5,204.8 173.0,201.5" fill="#403a34" stroke="#403a34" stroke-width="0.5"/><polygon points="173.0,201.5 175.5,204.8 178.1,209.7 180.6,214.0 183.2,217.8 185.7,221.7 188.3,225.5 190.8,229.1 193.3,232.7 195.9,236.3 198.4,239.9 201.0,243.5 203.5,247.1 206.1,250.8 208.6,254.4 211.1,258.1 213.7,260.0 216.2,261.7 218.8,263.3 221.3,264.9 223.9,266.5 226.4,268.5 228.9,270.4 231.5,272.3 234.0,274.1 236.6,275.9 239.1,277.4 241.7,278.8 244.2,280.3 246.7,281.7 249.3,283.4 251.8,285.1 254.4,286.7 256.9,288.4 259.5,290.0 262.0,292.0 264.0,293.8 270.7,295.4 277.5,297.1 284.2,300.0 291.0,302.9 297.7,305.2 304.4,307.5 311.2,309.8 317.9,312.3 324.7,315.0 331.4,317.7 338.1,319.8 344.9,321.8 351.6,323.8 358.3,325.7 365.1,327.7 371.8,329.8 378.6,332.0 385.3,334.1 392.0,336.4 398.8,338.7 405.5,340.9 412.3,343.2 419.0,345.2 425.7,347.3 432.5,349.4 439.2,351.3 446.0,353.2 452.7,355.2 459.4,356.9 466.2,358.5 472.9,360.0 479.7,361.4 486.4,362.7 493.1,364.1 499.9,365.4 506.6,367.0 513.3,368.8 520.1,370.5 526.8,372.2 533.6,373.9 540.3,375.5 547.0,377.1 553.8,378.7 560.5,380.3 567.3,381.9 574.0,383.5 580.7,385.2 587.5,387.0 594.2,388.7 601.0,390.5 607.7,392.2 614.4,393.7 621.2,395.1 627.9,396.6 634.7,398.0 641.4,399.5 648.1,401.0 654.9,402.7 661.6,404.6 668.3,406.4 675.1,408.3 681.8,410.1 688.6,411.4 695.3,412.6 702.0,413.9 708.8,415.1 715.5,416.3 722.3,417.6 729.0,418.8 729.0,425.3 722.3,424.0 715.5,422.8 708.8,421.5 702.0,420.3 695.3,419.0 688.6,417.8 681.8,416.5 675.1,414.6 668.3,412.7 661.6,410.7 654.9,408.8 648.1,407.0 641.4,405.5 634.7,404.0 627.9,402.5 621.2,400.9 614.4,399.4 607.7,397.9 601.0,396.1 594.2,394.3 587.5,392.5 580.7,390.7 574.0,388.9 567.3,387.3 560.5,385.7 553.8,384.0 547.0,382.4 540.3,380.7 533.6,379.1 526.8,377.3 520.1,375.5 513.3,373.7 506.6,371.9 499.9,370.2 493.1,368.9 486.4,367.5 479.7,366.2 472.9,364.8 466.2,363.3 459.4,361.8 452.7,360.1 446.0,358.2 439.2,356.3 432.5,354.4 425.7,352.2 419.0,350.1 412.3,347.9 405.5,345.6 398.8,343.3 392.0,341.0 385.3,338.6 378.6,336.4 371.8,334.2 365.1,332.1 358.3,330.1 351.6,328.2 344.9,326.2 338.1,324.2 331.4,322.0 324.7,319.3 317.9,316.5 311.2,313.8 304.4,311.5 297.7,309.1 291.0,306.8 284.2,303.8 277.5,300.8 270.7,299.2 264.0,297.7 262.0,295.9 259.5,293.8 256.9,292.1 254.4,290.5 251.8,288.8 249.3,287.1 246.7,285.5 244.2,284.0 241.7,282.5 239.1,281.1 236.6,279.6 234.0,277.8 231.5,275.9 228.9,274.0 226.4,272.1 223.9,270.2 221.3,268.6 218.8,267.0 216.2,265.4 213.7,263.8 211.1,261.8 208.6,258.0 206.1,254.1 203.5,250.3 201.0,246.4 198.4,242.7 195.9,239.0 193.3,235.2 190.8,231.5 188.3,227.8 185.7,223.7 183.2,219.7 180.6,215.6 178.1,211.0 175.5,205.6 173.0,201.9" fill="#2f2a26" stroke="#2f2a26" stroke-width="0.5"/><polygon points="173.0,201.9 175.5,205.6 178.1,211.0 180.6,215.6 183.2,219.7 185.7,223.7 188.3,227.8 190.8,231.5 193.3,235.2 195.9,239.0 198.4,242.7 201.0,246.4 203.5,250.3 206.1,254.1 208.6,258.0 211.1,261.8 213.7,263.8 216.2,265.4 218.8,267.0 221.3,268.6 223.9,270.2 226.4,272.1 228.9,274.0 231.5,275.9 234.0,277.8 236.6,279.6 239.1,281.1 241.7,282.5 244.2,284.0 246.7,285.5 249.3,287.1 251.8,288.8 254.4,290.5 256.9,292.1 259.5,293.8 262.0,295.9 264.0,297.7 270.7,299.2 277.5,300.8 284.2,303.8 291.0,306.8 297.7,309.1 304.4,311.5 311.2,313.8 317.9,316.5 324.7,319.3 331.4,322.0 338.1,324.2 344.9,326.2 351.6,328.2 358.3,330.1 365.1,332.1 371.8,334.2 378.6,336.4 385.3,338.6 392.0,341.0 398.8,343.3 405.5,345.6 412.3,347.9 419.0,350.1 425.7,352.2 432.5,354.4 439.2,356.3 446.0,358.2 452.7,360.1 459.4,361.8 466.2,363.3 472.9,364.8 479.7,366.2 486.4,367.5 493.1,368.9 499.9,370.2 506.6,371.9 513.3,373.7 520.1,375.5 526.8,377.3 533.6,379.1 540.3,380.7 547.0,382.4 553.8,384.0 560.5,385.7 567.3,387.3 574.0,388.9 580.7,390.7 587.5,392.5 594.2,394.3 601.0,396.1 607.7,397.9 614.4,399.4 621.2,400.9 627.9,402.5 634.7,404.0 641.4,405.5 648.1,407.0 654.9,408.8 661.6,410.7 668.3,412.7 675.1,414.6 681.8,416.5 688.6,417.8 695.3,419.0 702.0,420.3 708.8,421.5 715.5,422.8 722.3,424.0 729.0,425.3 729.0,430.5 722.3,429.2 715.5,428.0 708.8,426.7 702.0,425.4 695.3,424.2 688.6,422.9 681.8,421.6 675.1,419.6 668.3,417.6 661.6,415.7 654.9,413.7 648.1,411.9 641.4,410.3 634.7,408.7 627.9,407.2 621.2,405.6 614.4,404.0 607.7,402.5 601.0,400.6 594.2,398.8 587.5,396.9 580.7,395.1 574.0,393.3 567.3,391.6 560.5,389.9 553.8,388.2 547.0,386.6 540.3,384.9 533.6,383.2 526.8,381.4 520.1,379.5 513.3,377.7 506.6,375.8 499.9,374.1 493.1,372.7 486.4,371.4 479.7,370.0 472.9,368.6 466.2,367.2 459.4,365.7 452.7,364.1 446.0,362.2 439.2,360.3 432.5,358.3 425.7,356.1 419.0,353.9 412.3,351.7 405.5,349.4 398.8,347.0 392.0,344.6 385.3,342.3 378.6,340.0 371.8,337.8 365.1,335.6 358.3,333.7 351.6,331.7 344.9,329.7 338.1,327.7 331.4,325.5 324.7,322.7 317.9,319.8 311.2,317.0 304.4,314.6 297.7,312.2 291.0,309.8 284.2,306.8 277.5,303.8 270.7,302.3 264.0,300.8 262.0,298.9 259.5,296.8 256.9,295.1 254.4,293.4 251.8,291.8 249.3,290.1 246.7,288.4 244.2,287.0 241.7,285.5 239.1,284.1 236.6,282.6 234.0,280.8 231.5,278.9 228.9,276.9 226.4,275.0 223.9,273.0 221.3,271.5 218.8,269.9 216.2,268.3 213.7,266.8 211.1,264.8 208.6,260.8 206.1,256.8 203.5,252.8 201.0,248.8 198.4,244.9 195.9,241.1 193.3,237.3 190.8,233.5 188.3,229.6 185.7,225.4 183.2,221.2 180.6,217.0 178.1,212.1 175.5,206.3 173.0,202.3" fill="#1f1c1a" stroke="#1f1c1a" stroke-width="0.5"/></g>
<path d="M264,272 Q266,268 272,266 L278,266.5 L270,268 Q267,270 266,300 L264,300Z" fill="#a89f8e" opacity="0.45"/>
<path d="M457,329 Q459,327 462,327 L458,331 L456,364 L454.5,364Z" fill="#b0a690" opacity="0.45"/>
<!-- cyan spline -->
<polyline points="0,201 25,200.8 177,200.8 245.5,284 327,320 410,342.5 480,361 630,401 729,422 1057,488.6" fill="none" stroke="#3ad3e0" stroke-width="1.9" stroke-linejoin="round"/>
<!-- borders -->
<rect x="0" y="64" width="1058" height="1.3" fill="#6c6950"/>
<rect x="39.5" y="64" width="690.3" height="2" fill="#929050"/>
<rect x="41" y="66" width="688" height="1" fill="#100e0b"/>
<rect x="0" y="754" width="1058" height="2" fill="#6a6850"/>
<rect x="40" y="754" width="689.8" height="2" fill="#8e8a48"/>
<rect x="1057" y="64" width="1" height="692" fill="#7a7458"/>
<rect x="39.5" y="65" width="1.3" height="690" fill="#a09c60"/>
<rect x="728.6" y="65" width="1.2" height="690" fill="#a09c60"/>
</svg>
<div class="a" style="left:1058px;top:62px;width:142px;height:693px;background:#494949;"></div>
<div class="a" style="left:1058px;top:62px;width:3px;height:693px;background:#47443f;"></div>
<div class="a" style="left:1193.5px;top:62px;width:5.3px;height:693px;background:#3d3d3d;"></div>
<div class="a" style="left:1061px;top:65px;width:139px;height:1px;background:#6a6a6a;"></div>
<div class="a" style="left:1062px;top:67px;width:110px;height:18px;background:#3e3e3e;"></div>
<div class="a" style="left:1064px;top:90px;width:119px;height:10px;background:#696969;"></div>
<div class="t" style="top:90.00px;font-size:6.6px;line-height:10px;color:#e8e8e8;letter-spacing:-0.2px;left:1066px;">Line1789532913</div>
<div class="a" style="left:1187px;top:90px;width:9px;height:10px;background:#d2c02c;"></div>
<div class="a" style="left:1064px;top:107px;width:133px;height:10.5px;background:#5e5e5e;"></div>
<div class="t" style="top:107.30px;font-size:6.8px;line-height:10px;color:#e0e0e0;left:1066px;">Modifier List</div>
<div class="a" style="left:1190px;top:111px;width:0;height:0;border-left:2.5px solid transparent;border-right:2.5px solid transparent;border-top:3px solid #ddd"></div>
<div class="a" style="left:1064px;top:121px;width:133px;height:73.5px;background:#3b3b3b;border:1px solid #c8c8c8;"></div>
<div class="a" style="left:1065px;top:122px;width:122px;height:9.5px;background:#333;"></div>
<div class="a" style="left:1076px;top:122px;width:110.5px;height:9.5px;background:#5a8ccd;"></div>
<div class="a" style="left:1186.5px;top:122px;width:9.5px;height:71.5px;background:#f2f2f2;"></div>
<div class="a" style="left:1187px;top:132px;width:9px;height:17px;background:#d0d0d0;"></div>
<div class="a" style="left:1065px;top:170px;width:121.5px;height:1px;background:#6c6c6c;"></div>
<div class="a" style="left:1065px;top:180px;width:121.5px;height:1px;background:#6c6c6c;"></div>
<div class="t" style="top:122.00px;font-size:6.6px;line-height:10px;color:#f4f4f4;letter-spacing:-0.15px;left:1088px;">VRayDisplacementMod</div>
<div class="t" style="top:132.00px;font-size:6.6px;line-height:10px;color:#f4f4f4;letter-spacing:-0.15px;left:1088px;">Unwrap UVW</div>
<div class="t" style="top:142.00px;font-size:6.6px;line-height:10px;color:#f4f4f4;letter-spacing:-0.15px;left:1094.5px;">Vertex</div>
<div class="t" style="top:151.70px;font-size:6.6px;line-height:10px;color:#f4f4f4;letter-spacing:-0.15px;left:1094px;">Edge</div>
<div class="t" style="top:161.60px;font-size:6.6px;line-height:10px;color:#f4f4f4;letter-spacing:-0.15px;left:1094px;">Polygon</div>
<div class="t" style="top:171.60px;font-size:6.6px;line-height:10px;color:#f4f4f4;letter-spacing:-0.15px;left:1088px;">UVW Map</div>
<div class="t" style="top:181.50px;font-size:6.6px;line-height:10px;color:#f4f4f4;letter-spacing:-0.15px;left:1088px;">Edit Poly</div>
<svg style="left:1066px;top:124px" width="10" height="6" viewBox="0 0 10 6"><path d="M1,3 Q5,-1 9,3 Q5,7 1,3Z" fill="#d8d8d8"/><circle cx="5" cy="3" r="1.3" fill="#333"/></svg>
<svg style="left:1066px;top:134px" width="10" height="6" viewBox="0 0 10 6"><path d="M1,3 Q5,-1 9,3 Q5,7 1,3Z" fill="#d8d8d8"/><circle cx="5" cy="3" r="1.3" fill="#333"/></svg>
<svg style="left:1066px;top:173.6px" width="10" height="6" viewBox="0 0 10 6"><path d="M1,3 Q5,-1 9,3 Q5,7 1,3Z" fill="#d8d8d8"/><circle cx="5" cy="3" r="1.3" fill="#333"/></svg>
<svg style="left:1066px;top:183.5px" width="10" height="6" viewBox="0 0 10 6"><path d="M1,3 Q5,-1 9,3 Q5,7 1,3Z" fill="#d8d8d8"/><circle cx="5" cy="3" r="1.3" fill="#333"/></svg>
<div class="a" style="left:1080px;top:135.5px;width:0;height:0;border-left:2.5px solid transparent;border-right:2.5px solid transparent;border-top:3px solid #ddd"></div>
<div class="a" style="left:1080px;top:185.0px;width:0;height:0;border-left:2.5px solid transparent;border-right:2.5px solid transparent;border-top:3px solid #ddd"></div>
<div class="a" style="left:1081px;top:174.1px;width:0;height:0;border-top:2.5px solid transparent;border-bottom:2.5px solid transparent;border-left:3px solid #ddd"></div>
<div class="a" style="left:1082px;top:143px;width:0.8px;height:24px;background:#1e1e1e;"></div>
<div class="a" style="left:1082px;top:147px;width:10px;height:0.8px;background:#1e1e1e;"></div>
<div class="a" style="left:1082px;top:156.7px;width:10px;height:0.8px;background:#1e1e1e;"></div>
<div class="a" style="left:1082px;top:166.6px;width:10px;height:0.8px;background:#1e1e1e;"></div>
<svg style="left:1186px;top:120px" width="12" height="75" viewBox="0 0 12 75"><path d="M3,8.5 L5.8,5.5 L8.6,8.5" stroke="#333" stroke-width="1.2" fill="none"/><path d="M3,67 L5.8,70 L8.6,67" stroke="#333" stroke-width="1.2" fill="none"/></svg>
<svg style="left:1064px;top:198px" width="130" height="14" viewBox="0 0 130 14"><path d="M2.5,12 L6,8.5" stroke="#e8e8e8" stroke-width="1.2"/><path d="M5,6 L8,9 L10.5,6.5 L9.5,5.5 L10.5,3.5 L8.5,1.5 L6.5,2.5 L5.5,1.5Z" fill="#e8e8e8" transform="translate(0,1)"/><rect x="16.5" y="2" width="1.2" height="10" fill="#222"/><rect x="25" y="2" width="3" height="5" fill="#e0e0e0"/><rect x="25" y="7" width="3" height="5" fill="#7cc8c0"/><rect x="36.5" y="2" width="1.2" height="10" fill="#222"/><path d="M45,4 Q48,2 51,4 L52,9 Q49,12 46,10Z" fill="#1e1e1e"/><circle cx="45" cy="5" r="1.2" fill="#777"/><rect x="60" y="3" width="6" height="9" rx="1" fill="none" stroke="#cfcfcf" stroke-width="1"/><rect x="59" y="2" width="8" height="1.2" fill="#cfcfcf"/><path d="M62,5 L62,10 M64,5 L64,10" stroke="#cfcfcf" stroke-width="0.7"/><rect x="71.5" y="2" width="1.2" height="10" fill="#222"/><rect x="79" y="3" width="8" height="9" fill="#e8e0c8"/><path d="M79,6 L87,6 M79,9 L87,9 M82,3 L82,12" stroke="#666" stroke-width="0.7"/><path d="M83,5 L85,7 L88,1.5" stroke="#e0c030" stroke-width="1.3" fill="none"/></svg>
<div class="a" style="left:1066px;top:221px;width:128px;height:1px;background:#3a3a3a;"></div>
<div class="a" style="left:1125px;top:220px;width:10px;height:2px;background:#666;"></div>
<div class="a" style="left:1064px;top:226.5px;width:128.5px;height:463px;background:#545454;"></div>
<div class="t" style="top:227.50px;font-size:5px;line-height:10px;color:#bbb;left:1067px;">&#9662;</div>
<div class="t" style="top:227.50px;font-size:7px;line-height:10px;color:#f0f0f0;font-weight:bold;letter-spacing:-0.1px;left:1075px;">Parameters</div>
<div class="a" style="left:1184px;top:229px;width:5px;height:5px;background:#575757;"></div>
<div class="a" style="left:1081.5px;top:242.5px;width:89.5px;height:42.5px;border:1px solid #3e3e3e;box-shadow:1px 1px 0 #5a5a5a"></div>
<div class="a" style="left:1081.5px;top:291px;width:89.5px;height:152px;border:1px solid #3e3e3e;box-shadow:1px 1px 0 #5a5a5a"></div>
<div class="a" style="left:1081.5px;top:452px;width:89.5px;height:30.5px;border:1px solid #3e3e3e;box-shadow:1px 1px 0 #5a5a5a"></div>
<div class="a" style="left:1081.5px;top:488.5px;width:89.5px;height:141.0px;border:1px solid #3e3e3e;box-shadow:1px 1px 0 #5a5a5a"></div>
<div class="a" style="left:1081.5px;top:636px;width:89.5px;height:44px;border:1px solid #3e3e3e;box-shadow:1px 1px 0 #5a5a5a"></div>
<div class="t" style="top:238.00px;font-size:6.6px;line-height:10px;color:#e0e0e0;letter-spacing:-0.1px;left:1084px;background:#545454;padding-right:1px;line-height:8px;top:239.0px;">Type</div>
<div class="t" style="top:286.40px;font-size:6.6px;line-height:10px;color:#e0e0e0;letter-spacing:-0.1px;left:1084px;background:#545454;padding-right:1px;line-height:8px;top:287.4px;">Common params</div>
<div class="t" style="top:447.00px;font-size:6.6px;line-height:10px;color:#e0e0e0;letter-spacing:-0.1px;left:1084px;background:#545454;padding-right:1px;line-height:8px;top:448.0px;">2D mapping</div>
<div class="t" style="top:483.40px;font-size:6.6px;line-height:10px;color:#8a8a8a;letter-spacing:-0.1px;left:1084px;background:#545454;padding-right:1px;line-height:8px;top:484.4px;">3D mapping/subdivision</div>
<div class="t" style="top:630.70px;font-size:6.6px;line-height:10px;color:#8a8a8a;letter-spacing:-0.1px;left:1084px;background:#545454;padding-right:1px;line-height:8px;top:631.7px;">3D performance</div>
<div class="a" style="left:1089.5px;top:250.3px;width:7px;height:7px;border-radius:50%;background:#4a4a4a"></div>
<div class="a" style="left:1091.5px;top:252.3px;width:3px;height:3px;border-radius:50%;background:#f0f0f0"></div>
<div class="t" style="top:248.80px;font-size:6.2px;line-height:10px;color:#f2f2f2;letter-spacing:-0.15px;left:1100.5px;">2D mapping (landscape)</div>
<div class="a" style="left:1089.5px;top:262.0px;width:7px;height:7px;border-radius:50%;background:#4a4a4a"></div>
<div class="t" style="top:260.50px;font-size:6.2px;line-height:10px;color:#f2f2f2;letter-spacing:-0.15px;left:1100.5px;">3D mapping</div>
<div class="a" style="left:1089.5px;top:273.3px;width:7px;height:7px;border-radius:50%;background:#4a4a4a"></div>
<div class="t" style="top:271.80px;font-size:6.2px;line-height:10px;color:#f2f2f2;letter-spacing:-0.15px;left:1100.5px;">Subdivision</div>
<div class="t" style="top:298.40px;font-size:6.6px;line-height:10px;color:#e0e0e0;left:1086px;">Texmap</div>
<div class="a" style="left:1086px;top:312.8px;width:83px;height:9.5px;background:#5b5b5b;"></div>
<div class="t" style="top:312.60px;font-size:6.5px;line-height:10px;color:#f2f2f2;letter-spacing:-0.15px;left:1087px;">ement and First Mask&nbsp; ( Comp</div>
<div class="t" style="top:327.70px;font-size:6.5px;line-height:10px;color:#f2f2f2;letter-spacing:-0.1px;right:71px;">Texture chan</div>
<div class="a" style="left:1132px;top:328.7px;width:37px;height:8px;background:#5a5a5a;"></div>
<div class="t" style="top:327.70px;font-size:6.5px;line-height:10px;color:#e6e6e6;left:1134px;">1</div>
<div class="a" style="left:1165px;top:329.7px;width:0;height:0;border-left:1.5px solid transparent;border-right:1.5px solid transparent;border-bottom:2px solid #e6e6e6"></div><div class="a" style="left:1165px;top:333.7px;width:0;height:0;border-left:1.5px solid transparent;border-right:1.5px solid transparent;border-top:2px solid #e6e6e6"></div>
<div class="t" style="top:349.90px;font-size:6.5px;line-height:10px;color:#f2f2f2;letter-spacing:-0.1px;right:71px;">Filter blur</div>
<div class="a" style="left:1132px;top:350.9px;width:37px;height:8px;background:#5a5a5a;"></div>
<div class="t" style="top:349.90px;font-size:6.5px;line-height:10px;color:#e6e6e6;left:1134px;">0.001</div>
<div class="a" style="left:1165px;top:351.9px;width:0;height:0;border-left:1.5px solid transparent;border-right:1.5px solid transparent;border-bottom:2px solid #e6e6e6"></div><div class="a" style="left:1165px;top:355.9px;width:0;height:0;border-left:1.5px solid transparent;border-right:1.5px solid transparent;border-top:2px solid #e6e6e6"></div>
<div class="t" style="top:367.00px;font-size:6.5px;line-height:10px;color:#f2f2f2;letter-spacing:-0.1px;right:71px;">Amount</div>
<div class="a" style="left:1132px;top:368.0px;width:37px;height:8px;background:#5a5a5a;"></div>
<div class="t" style="top:367.00px;font-size:6.5px;line-height:10px;color:#e6e6e6;left:1134px;">0'0.5"</div>
<div class="a" style="left:1165px;top:369px;width:0;height:0;border-left:1.5px solid transparent;border-right:1.5px solid transparent;border-bottom:2px solid #e6e6e6"></div><div class="a" style="left:1165px;top:373px;width:0;height:0;border-left:1.5px solid transparent;border-right:1.5px solid transparent;border-top:2px solid #e6e6e6"></div>
<div class="t" style="top:378.40px;font-size:6.5px;line-height:10px;color:#f2f2f2;letter-spacing:-0.1px;right:71px;">Shift</div>
<div class="a" style="left:1132px;top:379.4px;width:37px;height:8px;background:#5a5a5a;"></div>
<div class="t" style="top:378.40px;font-size:6.5px;line-height:10px;color:#e6e6e6;left:1134px;">-0'0.5"</div>
<div class="a" style="left:1165px;top:380.4px;width:0;height:0;border-left:1.5px solid transparent;border-right:1.5px solid transparent;border-bottom:2px solid #e6e6e6"></div><div class="a" style="left:1165px;top:384.4px;width:0;height:0;border-left:1.5px solid transparent;border-right:1.5px solid transparent;border-top:2px solid #e6e6e6"></div>
<div class="t" style="top:418.20px;font-size:6.5px;line-height:10px;color:#858585;letter-spacing:-0.1px;right:71px;">Texmap min</div>
<div class="a" style="left:1132px;top:419.2px;width:37px;height:8px;background:#505050;"></div>
<div class="t" style="top:418.20px;font-size:6.5px;line-height:10px;color:#777;left:1134px;">0.0</div>
<div class="a" style="left:1165px;top:420.2px;width:0;height:0;border-left:1.5px solid transparent;border-right:1.5px solid transparent;border-bottom:2px solid #777"></div><div class="a" style="left:1165px;top:424.2px;width:0;height:0;border-left:1.5px solid transparent;border-right:1.5px solid transparent;border-top:2px solid #777"></div>
<div class="t" style="top:429.90px;font-size:6.5px;line-height:10px;color:#858585;letter-spacing:-0.1px;right:71px;">Texmap max</div>
<div class="a" style="left:1132px;top:430.9px;width:37px;height:8px;background:#505050;"></div>
<div class="t" style="top:429.90px;font-size:6.5px;line-height:10px;color:#777;left:1134px;">1.0</div>
<div class="a" style="left:1165px;top:431.9px;width:0;height:0;border-left:1.5px solid transparent;border-right:1.5px solid transparent;border-bottom:2px solid #777"></div><div class="a" style="left:1165px;top:435.9px;width:0;height:0;border-left:1.5px solid transparent;border-right:1.5px solid transparent;border-top:2px solid #777"></div>
<div class="t" style="top:458.20px;font-size:6.5px;line-height:10px;color:#f2f2f2;letter-spacing:-0.1px;right:71px;">Resolution</div>
<div class="a" style="left:1132px;top:459.2px;width:37px;height:8px;background:#5a5a5a;"></div>
<div class="t" style="top:458.20px;font-size:6.5px;line-height:10px;color:#e6e6e6;left:1134px;">1024</div>
<div class="a" style="left:1165px;top:460.2px;width:0;height:0;border-left:1.5px solid transparent;border-right:1.5px solid transparent;border-bottom:2px solid #e6e6e6"></div><div class="a" style="left:1165px;top:464.2px;width:0;height:0;border-left:1.5px solid transparent;border-right:1.5px solid transparent;border-top:2px solid #e6e6e6"></div>
<div class="t" style="top:528.80px;font-size:6.5px;line-height:10px;color:#858585;letter-spacing:-0.1px;right:71px;">Max subdivs</div>
<div class="a" style="left:1132px;top:529.8px;width:37px;height:8px;background:#505050;"></div>
<div class="t" style="top:528.80px;font-size:6.5px;line-height:10px;color:#777;left:1134px;">256</div>
<div class="a" style="left:1165px;top:530.8px;width:0;height:0;border-left:1.5px solid transparent;border-right:1.5px solid transparent;border-bottom:2px solid #777"></div><div class="a" style="left:1165px;top:534.8px;width:0;height:0;border-left:1.5px solid transparent;border-right:1.5px solid transparent;border-top:2px solid #777"></div>
<div class="t" style="top:602.30px;font-size:6.5px;line-height:10px;color:#858585;letter-spacing:-0.1px;right:71px;">Edge thresh</div>
<div class="a" style="left:1132px;top:603.3px;width:37px;height:8px;background:#505050;"></div>
<div class="t" style="top:602.30px;font-size:6.5px;line-height:10px;color:#777;left:1134px;">0.05</div>
<div class="a" style="left:1165px;top:604.3px;width:0;height:0;border-left:1.5px solid transparent;border-right:1.5px solid transparent;border-bottom:2px solid #777"></div><div class="a" style="left:1165px;top:608.3px;width:0;height:0;border-left:1.5px solid transparent;border-right:1.5px solid transparent;border-top:2px solid #777"></div>
<div class="t" style="top:389.70px;font-size:6.6px;line-height:10px;color:#f0f0f0;letter-spacing:-0.1px;left:1087px;">Water level</div>
<div class="a" style="left:1122px;top:391px;width:6px;height:7px;background:#565656;"></div>
<div class="a" style="left:1132px;top:390.7px;width:37px;height:8px;background:#505050;"></div>
<div class="t" style="top:389.70px;font-size:6.5px;line-height:10px;color:#777;left:1134px;">0'0.0"</div>
<div class="a" style="left:1165px;top:391.7px;width:0;height:0;border-left:1.5px solid transparent;border-right:1.5px solid transparent;border-bottom:2px solid #777"></div><div class="a" style="left:1165px;top:395.7px;width:0;height:0;border-left:1.5px solid transparent;border-right:1.5px solid transparent;border-top:2px solid #777"></div>
<div class="a" style="left:1088px;top:362.5px;width:81px;height:1.5px;background:#cfc8b8;"></div>
<div class="a" style="left:1088px;top:416px;width:81px;height:1.2px;background:#d0d0d0;"></div>
<div class="t" style="top:339.80px;font-size:5.5px;line-height:10px;color:#f2f2f2;left:1118px;">&#10004;</div>
<div class="t" style="top:339.80px;font-size:6.5px;line-height:10px;color:#f2f2f2;letter-spacing:-0.15px;left:1126px;">Filter texmap</div>
<div class="a" style="left:1109.5px;top:406.5px;width:5px;height:5px;background:#626262;"></div>
<div class="t" style="top:404.00px;font-size:6.5px;line-height:10px;color:#f2f2f2;letter-spacing:-0.15px;left:1117px;">Relative to bbox</div>
<div class="t" style="top:470.20px;font-size:5.5px;line-height:10px;color:#f2f2f2;left:1117px;">&#10004;</div>
<div class="t" style="top:470.20px;font-size:6.5px;line-height:10px;color:#f2f2f2;letter-spacing:-0.15px;left:1125px;">Tight bounds</div>
<div class="t" style="top:506.60px;font-size:5.5px;line-height:10px;color:#858585;left:1106px;">&#10004;</div>
<div class="t" style="top:506.60px;font-size:6.5px;line-height:10px;color:#858585;letter-spacing:-0.15px;left:1114px;">View-dependent</div>
<div class="a" style="left:1111.5px;top:520.5px;width:5px;height:5px;background:#5a5a5a;"></div>
<div class="t" style="top:518.00px;font-size:6.5px;line-height:10px;color:#858585;letter-spacing:-0.15px;left:1119px;">Use object mtl</div>
<div class="a" style="left:1093.5px;top:543.8px;width:5px;height:5px;background:#5a5a5a;"></div>
<div class="t" style="top:541.30px;font-size:6.5px;line-height:10px;color:#858585;letter-spacing:-0.15px;left:1101px;">Classic Catmull-Clark</div>
<div class="a" style="left:1093.5px;top:555.8px;width:5px;height:5px;background:#5a5a5a;"></div>
<div class="t" style="top:553.30px;font-size:6.5px;line-height:10px;color:#858585;letter-spacing:-0.15px;left:1101px;">Preserve Geom Bnd</div>
<div class="a" style="left:1112.5px;top:566.5px;width:5px;height:5px;background:#5a5a5a;"></div>
<div class="t" style="top:564.00px;font-size:6.5px;line-height:10px;color:#858585;letter-spacing:-0.15px;left:1120px;">Smooth UVs</div>
<div class="a" style="left:1107.5px;top:592.8px;width:5px;height:5px;background:#5a5a5a;"></div>
<div class="t" style="top:590.30px;font-size:6.5px;line-height:10px;color:#858585;letter-spacing:-0.15px;left:1115px;">Keep continuity</div>
<div class="t" style="top:644.00px;font-size:5.5px;line-height:10px;color:#858585;left:1112px;">&#10004;</div>
<div class="t" style="top:644.00px;font-size:6.5px;line-height:10px;color:#858585;letter-spacing:-0.15px;left:1120px;">Tight bounds</div>
<div class="t" style="top:654.60px;font-size:5.5px;line-height:10px;color:#858585;left:1101px;">&#10004;</div>
<div class="t" style="top:654.60px;font-size:6.5px;line-height:10px;color:#858585;letter-spacing:-0.15px;left:1109px;">Static geometry</div>
<div class="a" style="left:1104.5px;top:669.0px;width:5px;height:5px;background:#5a5a5a;"></div>
<div class="t" style="top:666.50px;font-size:6.5px;line-height:10px;color:#858585;letter-spacing:-0.15px;left:1112px;">Cache normals</div>
<div class="t" style="top:494.70px;font-size:6.5px;line-height:10px;color:#858585;letter-spacing:-0.1px;left:1091px;">Edge length</div>
<div class="a" style="left:1127px;top:496px;width:28px;height:8px;background:#505050;"></div>
<div class="t" style="top:494.70px;font-size:6.5px;line-height:10px;color:#777;left:1129px;">6.0</div>
<div class="t" style="top:494.70px;font-size:6.5px;line-height:10px;color:#858585;left:1158px;">pixel</div>
<div class="t" style="top:575.90px;font-size:6.5px;line-height:10px;color:#858585;letter-spacing:-0.15px;left:1087px;">Preserve Map Bnd</div>
<div class="a" style="left:1141px;top:577px;width:27px;height:8px;background:#505050;"></div>
<div class="t" style="top:614.80px;font-size:6.5px;line-height:10px;color:#858585;letter-spacing:-0.1px;left:1090px;">Vector displ</div>
<div class="a" style="left:1126px;top:615.8px;width:42px;height:8px;background:#505050;"></div>
<div class="t" style="top:614.80px;font-size:6.5px;line-height:10px;color:#7a7a7a;left:1128px;">Disabled</div>
<div class="t" style="top:575.90px;font-size:6.5px;line-height:10px;color:#7a7a7a;left:1143px;">[ ]</div>
<div class="a" style="left:1162px;top:579.9px;width:0;height:0;border-left:2px solid transparent;border-right:2px solid transparent;border-top:2.5px solid #7a7a7a"></div>
<div class="a" style="left:1162px;top:618.8px;width:0;height:0;border-left:2px solid transparent;border-right:2px solid transparent;border-top:2.5px solid #7a7a7a"></div>
<svg style="left:0;top:0" width="1200" height="100" viewBox="0 0 1200 100"><path d="M1064.5,77 L1075,77 M1069.7,71.5 L1069.7,82.5" stroke="#e0e0e0" stroke-width="1.3"/><rect x="1080" y="69" width="16" height="16" fill="#414a4a"/><path d="M1083,71.5 L1083,82 L1093.5,82" stroke="#40a0a0" stroke-width="1.1" fill="none"/><path d="M1084,81 Q1086,73 1092.5,72.5" stroke="#e8e8e8" stroke-width="1.2" fill="none"/><circle cx="1092.8" cy="72.5" r="1.1" fill="#40a0a0"/><rect x="1103" y="70" width="8" height="2.5" fill="#e0e0e0"/><rect x="1103" y="74" width="8" height="2.5" fill="#3a9a80"/><path d="M1103.5,77 L1103.5,83 M1110.5,77 L1110.5,83" stroke="#3a9a80" stroke-width="1"/><rect x="1103" y="82" width="8" height="1.5" fill="#3a9a80"/><circle cx="1127" cy="77" r="4.3" fill="#bdbdbd"/><path d="M1122.5,74 Q1120,77 1122.5,80" stroke="#3a9a80" stroke-width="1.5" fill="none"/><rect x="1138" y="72" width="12" height="7" fill="#c8c8c8"/><rect x="1142.5" y="79.5" width="3" height="2" fill="#c8c8c8"/><path d="M1157.5,72 L1166,81.5" stroke="#e0e0e0" stroke-width="1.8"/><path d="M1156.5,73.5 Q1157,70 1160,71" stroke="#e0e0e0" stroke-width="1.5" fill="none"/></svg>
<svg style="left:0;top:0" width="1200" height="780" viewBox="0 0 1200 780"><path d="M1153.0,110.0 C1155.3,109.8 1162.7,107.7 1167.0,108.5 C1171.3,109.3 1176.5,112.1 1179.0,115.0 C1181.5,117.9 1182.3,122.9 1182.0,126.0 C1181.7,129.1 1180.7,131.9 1177.0,133.5 C1173.3,135.1 1171.2,135.3 1160.0,135.5 C1148.8,135.7 1125.3,135.1 1110.0,134.5 C1094.7,133.9 1077.5,133.2 1068.0,132.0 C1058.5,130.8 1053.3,129.1 1053.0,127.0 C1052.7,124.9 1059.8,121.2 1066.0,119.5 C1072.2,117.8 1079.3,117.5 1090.0,117.0 C1100.7,116.5 1117.0,116.5 1130.0,116.5 C1143.0,116.5 1161.7,116.9 1168.0,117.0" fill="none" stroke="#bb2236" stroke-width="2" stroke-linecap="round" opacity="0.95"/><path d="M1086.0,244.3 C1091.5,244.5 1107.2,244.9 1119.0,245.3 C1130.8,245.7 1147.0,245.7 1157.0,246.6 C1167.0,247.5 1173.8,248.8 1179.0,250.5 C1184.2,252.2 1187.1,254.7 1188.5,257.0 C1189.9,259.3 1189.1,262.6 1187.5,264.3 C1185.9,266.0 1183.0,266.6 1178.8,267.0 C1174.6,267.4 1170.6,267.1 1162.5,266.4 C1154.4,265.7 1140.8,263.9 1130.0,262.8 C1119.2,261.7 1106.2,261.0 1097.5,260.0 C1088.8,259.0 1082.2,258.1 1078.0,256.7 C1073.8,255.2 1072.8,252.9 1072.6,251.3 C1072.4,249.7 1073.8,248.0 1077.0,247.0 C1080.2,246.0 1079.5,245.6 1092.0,245.3 C1104.5,245.0 1141.8,245.1 1151.7,245.0" fill="none" stroke="#bb2236" stroke-width="2" stroke-linecap="round" opacity="0.95"/><path d="M1150.0,353.5 C1153.7,354.2 1165.6,355.2 1172.0,358.0 C1178.4,360.8 1185.7,366.2 1188.5,370.0 C1191.3,373.8 1190.6,377.4 1188.7,381.0 C1186.8,384.6 1186.2,389.7 1177.0,391.5 C1167.8,393.3 1148.0,392.6 1133.4,391.8 C1118.8,391.1 1098.8,390.5 1089.4,387.0 C1080.0,383.5 1076.8,375.2 1076.8,371.0 C1076.8,366.8 1080.0,363.8 1089.4,361.5 C1098.8,359.2 1120.4,357.7 1133.0,357.0 C1145.6,356.3 1159.7,357.4 1165.0,357.5" fill="none" stroke="#bb2236" stroke-width="2" stroke-linecap="round" opacity="0.95"/><path d="M1148.0,432.0 C1151.3,431.6 1161.7,428.5 1168.0,429.3 C1174.3,430.1 1181.2,433.4 1186.0,437.0 C1190.8,440.6 1194.8,446.8 1197.0,451.0 C1199.2,455.2 1199.7,458.5 1199.5,462.0 C1199.3,465.5 1198.6,469.0 1196.0,472.0 C1193.4,475.0 1192.3,478.4 1184.0,480.0 C1175.7,481.6 1160.7,481.5 1146.0,481.5 C1131.3,481.5 1108.3,481.2 1096.0,480.0 C1083.7,478.8 1076.5,476.9 1072.0,474.0 C1067.5,471.1 1067.5,466.2 1069.3,462.6 C1071.1,459.0 1074.5,454.8 1083.0,452.6 C1091.5,450.4 1103.2,450.1 1120.0,449.5 C1136.8,448.9 1173.3,449.1 1184.0,449.0" fill="none" stroke="#bb2236" stroke-width="2" stroke-linecap="round" opacity="0.95"/></svg>
<div class="a" style="left:1058px;top:755px;width:142px;height:1px;background:#4a4a4a;"></div>
<div class="a" style="left:0px;top:756px;width:1200px;height:1.5px;background:#505050;"></div>
<div class="a" style="left:0px;top:757.5px;width:1200px;height:0.5px;background:#2a2a2a;"></div>
<div class="a" style="left:0px;top:758px;width:1171px;height:15px;background:#2c2c2c;"></div>
<div class="a" style="left:1171px;top:758px;width:29px;height:15px;background:#3c3c3c;"></div>
<div class="a" style="left:0px;top:773px;width:1200px;height:7px;background:#434343;"></div>
<svg style="left:0;top:0" width="1200" height="780" viewBox="0 0 1200 780"><rect x="5.75" y="758" width="0.8" height="7.5" fill="#707070"/><rect x="19.88" y="758" width="0.8" height="7.5" fill="#707070"/><rect x="34.00" y="758" width="0.8" height="7.5" fill="#707070"/><rect x="48.12" y="758" width="0.8" height="7.5" fill="#707070"/><rect x="62.25" y="758" width="0.8" height="7.5" fill="#707070"/><rect x="76.38" y="758" width="0.8" height="7.5" fill="#707070"/><rect x="90.50" y="758" width="0.8" height="7.5" fill="#707070"/><rect x="104.62" y="758" width="0.8" height="7.5" fill="#707070"/><rect x="118.75" y="758" width="0.8" height="7.5" fill="#707070"/><rect x="132.88" y="758" width="0.8" height="7.5" fill="#707070"/><rect x="147.00" y="758" width="0.8" height="7.5" fill="#707070"/><rect x="161.12" y="758" width="0.8" height="7.5" fill="#707070"/><rect x="175.25" y="758" width="0.8" height="7.5" fill="#707070"/><rect x="189.38" y="758" width="0.8" height="7.5" fill="#707070"/><rect x="203.50" y="758" width="0.8" height="7.5" fill="#707070"/><rect x="217.62" y="758" width="0.8" height="7.5" fill="#707070"/><rect x="231.75" y="758" width="0.8" height="7.5" fill="#707070"/><rect x="245.88" y="758" width="0.8" height="7.5" fill="#707070"/><rect x="260.00" y="758" width="0.8" height="7.5" fill="#707070"/><rect x="274.12" y="758" width="0.8" height="7.5" fill="#707070"/><rect x="288.25" y="758" width="0.8" height="7.5" fill="#707070"/><rect x="302.38" y="758" width="0.8" height="7.5" fill="#707070"/><rect x="316.50" y="758" width="0.8" height="7.5" fill="#707070"/><rect x="330.62" y="758" width="0.8" height="7.5" fill="#707070"/><rect x="344.75" y="758" width="0.8" height="7.5" fill="#707070"/><rect x="358.88" y="758" width="0.8" height="7.5" fill="#707070"/><rect x="373.00" y="758" width="0.8" height="7.5" fill="#707070"/><rect x="387.12" y="758" width="0.8" height="7.5" fill="#707070"/><rect x="401.25" y="758" width="0.8" height="7.5" fill="#707070"/><rect x="415.38" y="758" width="0.8" height="7.5" fill="#707070"/><rect x="429.50" y="758" width="0.8" height="7.5" fill="#707070"/><rect x="443.62" y="758" width="0.8" height="7.5" fill="#707070"/><rect x="457.75" y="758" width="0.8" height="7.5" fill="#707070"/><rect x="471.88" y="758" width="0.8" height="7.5" fill="#707070"/><rect x="486.00" y="758" width="0.8" height="7.5" fill="#707070"/><rect x="500.12" y="758" width="0.8" height="7.5" fill="#707070"/><rect x="514.25" y="758" width="0.8" height="7.5" fill="#707070"/><rect x="528.38" y="758" width="0.8" height="7.5" fill="#707070"/><rect x="542.50" y="758" width="0.8" height="7.5" fill="#707070"/><rect x="556.62" y="758" width="0.8" height="7.5" fill="#707070"/><rect x="570.75" y="758" width="0.8" height="7.5" fill="#707070"/><rect x="584.88" y="758" width="0.8" height="7.5" fill="#707070"/><rect x="599.00" y="758" width="0.8" height="7.5" fill="#707070"/><rect x="613.12" y="758" width="0.8" height="7.5" fill="#707070"/><rect x="627.25" y="758" width="0.8" height="7.5" fill="#707070"/><rect x="641.38" y="758" width="0.8" height="7.5" fill="#707070"/><rect x="655.50" y="758" width="0.8" height="7.5" fill="#707070"/><rect x="669.62" y="758" width="0.8" height="7.5" fill="#707070"/><rect x="683.75" y="758" width="0.8" height="7.5" fill="#707070"/><rect x="697.88" y="758" width="0.8" height="7.5" fill="#707070"/><rect x="712.00" y="758" width="0.8" height="7.5" fill="#707070"/><rect x="726.12" y="758" width="0.8" height="7.5" fill="#707070"/><rect x="740.25" y="758" width="0.8" height="7.5" fill="#707070"/><rect x="754.38" y="758" width="0.8" height="7.5" fill="#707070"/><rect x="768.50" y="758" width="0.8" height="7.5" fill="#707070"/><rect x="782.62" y="758" width="0.8" height="7.5" fill="#707070"/><rect x="796.75" y="758" width="0.8" height="7.5" fill="#707070"/><rect x="810.88" y="758" width="0.8" height="7.5" fill="#707070"/><rect x="825.00" y="758" width="0.8" height="7.5" fill="#707070"/><rect x="839.12" y="758" width="0.8" height="7.5" fill="#707070"/><rect x="853.25" y="758" width="0.8" height="7.5" fill="#707070"/><rect x="867.38" y="758" width="0.8" height="7.5" fill="#707070"/><rect x="881.50" y="758" width="0.8" height="7.5" fill="#707070"/><rect x="895.62" y="758" width="0.8" height="7.5" fill="#707070"/><rect x="909.75" y="758" width="0.8" height="7.5" fill="#707070"/><rect x="923.88" y="758" width="0.8" height="7.5" fill="#707070"/><rect x="938.00" y="758" width="0.8" height="7.5" fill="#707070"/><rect x="952.12" y="758" width="0.8" height="7.5" fill="#707070"/><rect x="966.25" y="758" width="0.8" height="7.5" fill="#707070"/><rect x="980.38" y="758" width="0.8" height="7.5" fill="#707070"/><rect x="994.50" y="758" width="0.8" height="7.5" fill="#707070"/><rect x="1008.62" y="758" width="0.8" height="7.5" fill="#707070"/><rect x="1022.75" y="758" width="0.8" height="7.5" fill="#707070"/><rect x="1036.88" y="758" width="0.8" height="7.5" fill="#707070"/><rect x="1051.00" y="758" width="0.8" height="7.5" fill="#707070"/><rect x="1065.12" y="758" width="0.8" height="7.5" fill="#707070"/><rect x="1079.25" y="758" width="0.8" height="7.5" fill="#707070"/><rect x="1093.38" y="758" width="0.8" height="7.5" fill="#707070"/><rect x="1107.50" y="758" width="0.8" height="7.5" fill="#707070"/><rect x="1121.62" y="758" width="0.8" height="7.5" fill="#707070"/><rect x="1135.75" y="758" width="0.8" height="7.5" fill="#707070"/><rect x="1149.88" y="758" width="0.8" height="7.5" fill="#707070"/><rect x="1164.00" y="758" width="0.8" height="7.5" fill="#707070"/></svg>
<div class="t" style="left:1.65px;width:9px;text-align:center;top:764.5px;font-size:6.5px;line-height:9px;color:#d8d8d8;letter-spacing:-0.3px">18</div>
<div class="t" style="left:29.90px;width:9px;text-align:center;top:764.5px;font-size:6.5px;line-height:9px;color:#d8d8d8;letter-spacing:-0.3px">20</div>
<div class="t" style="left:58.15px;width:9px;text-align:center;top:764.5px;font-size:6.5px;line-height:9px;color:#d8d8d8;letter-spacing:-0.3px">22</div>
<div class="t" style="left:86.40px;width:9px;text-align:center;top:764.5px;font-size:6.5px;line-height:9px;color:#d8d8d8;letter-spacing:-0.3px">24</div>
<div class="t" style="left:114.65px;width:9px;text-align:center;top:764.5px;font-size:6.5px;line-height:9px;color:#d8d8d8;letter-spacing:-0.3px">26</div>
<div class="t" style="left:142.90px;width:9px;text-align:center;top:764.5px;font-size:6.5px;line-height:9px;color:#d8d8d8;letter-spacing:-0.3px">28</div>
<div class="t" style="left:171.15px;width:9px;text-align:center;top:764.5px;font-size:6.5px;line-height:9px;color:#d8d8d8;letter-spacing:-0.3px">30</div>
<div class="t" style="left:199.40px;width:9px;text-align:center;top:764.5px;font-size:6.5px;line-height:9px;color:#d8d8d8;letter-spacing:-0.3px">32</div>
<div class="t" style="left:227.65px;width:9px;text-align:center;top:764.5px;font-size:6.5px;line-height:9px;color:#d8d8d8;letter-spacing:-0.3px">34</div>
<div class="t" style="left:255.90px;width:9px;text-align:center;top:764.5px;font-size:6.5px;line-height:9px;color:#d8d8d8;letter-spacing:-0.3px">36</div>
<div class="t" style="left:284.15px;width:9px;text-align:center;top:764.5px;font-size:6.5px;line-height:9px;color:#d8d8d8;letter-spacing:-0.3px">38</div>
<div class="t" style="left:312.40px;width:9px;text-align:center;top:764.5px;font-size:6.5px;line-height:9px;color:#d8d8d8;letter-spacing:-0.3px">40</div>
<div class="t" style="left:340.65px;width:9px;text-align:center;top:764.5px;font-size:6.5px;line-height:9px;color:#d8d8d8;letter-spacing:-0.3px">42</div>
<div class="t" style="left:368.90px;width:9px;text-align:center;top:764.5px;font-size:6.5px;line-height:9px;color:#d8d8d8;letter-spacing:-0.3px">44</div>
<div class="t" style="left:397.15px;width:9px;text-align:center;top:764.5px;font-size:6.5px;line-height:9px;color:#d8d8d8;letter-spacing:-0.3px">46</div>
<div class="t" style="left:425.40px;width:9px;text-align:center;top:764.5px;font-size:6.5px;line-height:9px;color:#d8d8d8;letter-spacing:-0.3px">48</div>
<div class="t" style="left:453.65px;width:9px;text-align:center;top:764.5px;font-size:6.5px;line-height:9px;color:#d8d8d8;letter-spacing:-0.3px">50</div>
<div class="t" style="left:481.90px;width:9px;text-align:center;top:764.5px;font-size:6.5px;line-height:9px;color:#d8d8d8;letter-spacing:-0.3px">52</div>
<div class="t" style="left:510.15px;width:9px;text-align:center;top:764.5px;font-size:6.5px;line-height:9px;color:#d8d8d8;letter-spacing:-0.3px">54</div>
<div class="t" style="left:538.40px;width:9px;text-align:center;top:764.5px;font-size:6.5px;line-height:9px;color:#d8d8d8;letter-spacing:-0.3px">56</div>
<div class="t" style="left:566.65px;width:9px;text-align:center;top:764.5px;font-size:6.5px;line-height:9px;color:#d8d8d8;letter-spacing:-0.3px">58</div>
<div class="t" style="left:594.90px;width:9px;text-align:center;top:764.5px;font-size:6.5px;line-height:9px;color:#d8d8d8;letter-spacing:-0.3px">60</div>
<div class="t" style="left:623.15px;width:9px;text-align:center;top:764.5px;font-size:6.5px;line-height:9px;color:#d8d8d8;letter-spacing:-0.3px">62</div>
<div class="t" style="left:651.40px;width:9px;text-align:center;top:764.5px;font-size:6.5px;line-height:9px;color:#d8d8d8;letter-spacing:-0.3px">64</div>
<div class="t" style="left:679.65px;width:9px;text-align:center;top:764.5px;font-size:6.5px;line-height:9px;color:#d8d8d8;letter-spacing:-0.3px">66</div>
<div class="t" style="left:707.90px;width:9px;text-align:center;top:764.5px;font-size:6.5px;line-height:9px;color:#d8d8d8;letter-spacing:-0.3px">68</div>
<div class="t" style="left:736.15px;width:9px;text-align:center;top:764.5px;font-size:6.5px;line-height:9px;color:#d8d8d8;letter-spacing:-0.3px">70</div>
<div class="t" style="left:764.40px;width:9px;text-align:center;top:764.5px;font-size:6.5px;line-height:9px;color:#d8d8d8;letter-spacing:-0.3px">72</div>
<div class="t" style="left:792.65px;width:9px;text-align:center;top:764.5px;font-size:6.5px;line-height:9px;color:#d8d8d8;letter-spacing:-0.3px">74</div>
<div class="t" style="left:820.90px;width:9px;text-align:center;top:764.5px;font-size:6.5px;line-height:9px;color:#d8d8d8;letter-spacing:-0.3px">76</div>
<div class="t" style="left:849.15px;width:9px;text-align:center;top:764.5px;font-size:6.5px;line-height:9px;color:#d8d8d8;letter-spacing:-0.3px">78</div>
<div class="t" style="left:877.40px;width:9px;text-align:center;top:764.5px;font-size:6.5px;line-height:9px;color:#d8d8d8;letter-spacing:-0.3px">80</div>
<div class="t" style="left:905.65px;width:9px;text-align:center;top:764.5px;font-size:6.5px;line-height:9px;color:#d8d8d8;letter-spacing:-0.3px">82</div>
<div class="t" style="left:933.90px;width:9px;text-align:center;top:764.5px;font-size:6.5px;line-height:9px;color:#d8d8d8;letter-spacing:-0.3px">84</div>
<div class="t" style="left:962.15px;width:9px;text-align:center;top:764.5px;font-size:6.5px;line-height:9px;color:#d8d8d8;letter-spacing:-0.3px">86</div>
<div class="t" style="left:990.40px;width:9px;text-align:center;top:764.5px;font-size:6.5px;line-height:9px;color:#d8d8d8;letter-spacing:-0.3px">88</div>
<div class="t" style="left:1018.65px;width:9px;text-align:center;top:764.5px;font-size:6.5px;line-height:9px;color:#d8d8d8;letter-spacing:-0.3px">90</div>
<div class="t" style="left:1046.90px;width:9px;text-align:center;top:764.5px;font-size:6.5px;line-height:9px;color:#d8d8d8;letter-spacing:-0.3px">92</div>
<div class="t" style="left:1075.15px;width:9px;text-align:center;top:764.5px;font-size:6.5px;line-height:9px;color:#d8d8d8;letter-spacing:-0.3px">94</div>
<div class="t" style="left:1103.40px;width:9px;text-align:center;top:764.5px;font-size:6.5px;line-height:9px;color:#d8d8d8;letter-spacing:-0.3px">96</div>
<div class="t" style="left:1131.65px;width:9px;text-align:center;top:764.5px;font-size:6.5px;line-height:9px;color:#d8d8d8;letter-spacing:-0.3px">98</div>
<div class="t" style="left:1157.90px;width:13px;text-align:center;top:764.5px;font-size:6.5px;line-height:9px;color:#d8d8d8;letter-spacing:-0.3px">100</div>
<div class="a" style="left:732px;top:777px;width:33px;height:3px;background:#585858;border-top:1px solid #6a6a6a;"></div>
<div class="a" style="left:780px;top:777px;width:30px;height:3px;background:#585858;border-top:1px solid #6a6a6a;"></div>
<div class="a" style="left:830px;top:777px;width:32px;height:3px;background:#585858;border-top:1px solid #6a6a6a;"></div>
<div class="a" style="left:1012px;top:777px;width:23px;height:3px;background:#585858;border-top:1px solid #6a6a6a;"></div>
<div class="a" style="left:1040px;top:777px;width:25px;height:3px;background:#585858;border-top:1px solid #6a6a6a;"></div>
<div class="a" style="left:1070px;top:777px;width:65px;height:3px;background:#585858;border-top:1px solid #6a6a6a;"></div>
<div class="a" style="left:683px;top:777px;width:1.5px;height:3px;background:#ccc;"></div>
<div class="a" style="left:690px;top:777px;width:1.5px;height:3px;background:#ccc;"></div>
<div class="a" style="left:701px;top:777px;width:8px;height:1.5px;background:#ccc;"></div>
<div class="a" style="left:1146px;top:776px;width:3px;height:2px;background:#bbb;"></div>
<div class="a" style="left:1152px;top:776px;width:3px;height:2px;background:#bbb;"></div>
<div class="a" style="left:1198.8px;top:5px;width:1.2px;height:775px;background:#f2f2f2;"></div>
</body></html>
